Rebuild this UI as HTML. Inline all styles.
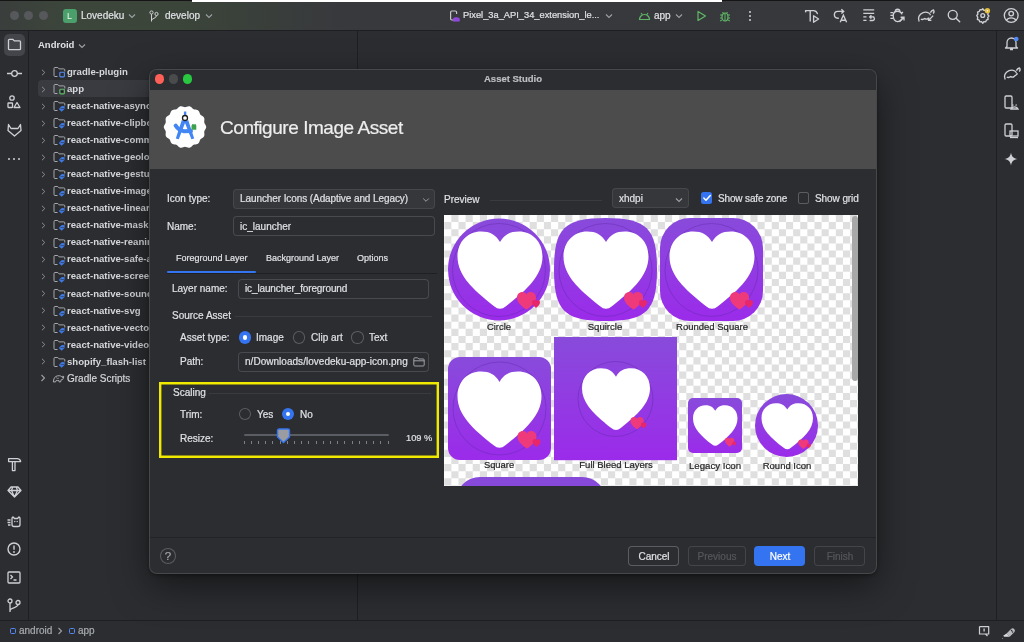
<!DOCTYPE html><html><head><meta charset="utf-8"><style>
html,body{margin:0;padding:0;width:1024px;height:642px;overflow:hidden;background:#2b2d30;}
body{position:relative;font-family:"Liberation Sans",sans-serif;}
.t{position:absolute;white-space:nowrap;will-change:transform;-webkit-text-stroke:0.2px currentColor;}
svg{overflow:visible}
</style></head><body>
<div style="position:absolute;left:0px;top:0px;width:1024px;height:30px;background:linear-gradient(90deg,#3a3e3c 0px,#3c463b 70px,#3b4539 180px,#393e3b 270px,#38393d 340px,#37383c 1024px)"></div>
<div style="position:absolute;left:0px;top:0px;width:1024px;height:1px;background:#151515"></div>
<div style="position:absolute;left:192px;top:0px;width:530px;height:2px;background:#ffffff"></div>
<div style="position:absolute;left:0px;top:30px;width:1024px;height:1px;background:#1e1f22"></div>
<div style="position:absolute;left:9.5px;top:11px;width:9px;height:9px;border-radius:50%;background:#56585b"></div>
<div style="position:absolute;left:24.0px;top:11px;width:9px;height:9px;border-radius:50%;background:#56585b"></div>
<div style="position:absolute;left:38.5px;top:11px;width:9px;height:9px;border-radius:50%;background:#56585b"></div>
<div style="position:absolute;left:63px;top:9px;width:14px;height:14px;border-radius:3px;background:#4a9f6a"></div>
<div class="t" style="left:66.8px;top:12.38px;font-size:9px;line-height:9px;color:#f4f4f4;font-weight:400;letter-spacing:0px;-webkit-text-stroke:0">L</div>
<div class="t" style="left:81px;top:11.04px;font-size:10px;line-height:10px;color:#dfe1e5;font-weight:400;letter-spacing:0px;">Lovedeku</div>
<svg style="position:absolute;left:128px;top:13px;" width="8" height="6" viewBox="0 0 8 6" fill="none"><path d="M1 1.5l3 3 3-3" stroke="#9da0a8" stroke-width="1.1"/></svg>
<svg style="position:absolute;left:149px;top:10px;" width="10" height="12" viewBox="0 0 10 12" fill="none"><circle cx="2.5" cy="2.5" r="1.6" stroke="#ced0d6" stroke-width="1"/><circle cx="7.5" cy="4" r="1.6" stroke="#ced0d6" stroke-width="1"/><path d="M2.5 4.1v7.4M7.5 5.6c0 3-5 2.5-5 5" stroke="#ced0d6" stroke-width="1"/></svg>
<div class="t" style="left:165px;top:11.04px;font-size:10px;line-height:10px;color:#dfe1e5;font-weight:400;letter-spacing:0px;">develop</div>
<svg style="position:absolute;left:205px;top:13px;" width="8" height="6" viewBox="0 0 8 6" fill="none"><path d="M1 1.5l3 3 3-3" stroke="#9da0a8" stroke-width="1.1"/></svg>
<svg style="position:absolute;left:448px;top:8px;" width="14" height="16" viewBox="0 0 14 16" fill="none"><path d="M5 12H3.8a1.2 1.2 0 0 1-1.2-1.2V4.2A1.2 1.2 0 0 1 3.8 3h3.6a1.2 1.2 0 0 1 1.2 1.2V6" stroke="#c4c6ca" stroke-width="1.2"/><path d="M5 12.8a3.3 3.3 0 0 1 6.6 0v.6H5z" fill="#9b4fe6"/><rect x="5" y="9.5" width="6.6" height="3.6" rx="1.5" fill="#8e48dc"/></svg>
<div class="t" style="left:463.2px;top:11.33px;font-size:9.3px;line-height:9.3px;color:#dfe1e5;font-weight:400;letter-spacing:0px;">Pixel_3a_API_34_extension_le...</div>
<svg style="position:absolute;left:605px;top:13px;" width="8" height="6" viewBox="0 0 8 6" fill="none"><path d="M1 1.5l3 3 3-3" stroke="#9da0a8" stroke-width="1.1"/></svg>
<svg style="position:absolute;left:638px;top:11px;" width="13" height="10" viewBox="0 0 13 10" fill="none"><path d="M1.5 8.5a5 5 0 0 1 10 0z" stroke="#5fb865" stroke-width="1.2"/><path d="M3 2l1.5 2M10 2l-1.5 2" stroke="#5fb865" stroke-width="1.1"/></svg>
<div class="t" style="left:654px;top:11.04px;font-size:10px;line-height:10px;color:#dfe1e5;font-weight:400;letter-spacing:0px;">app</div>
<svg style="position:absolute;left:675px;top:13px;" width="8" height="6" viewBox="0 0 8 6" fill="none"><path d="M1 1.5l3 3 3-3" stroke="#9da0a8" stroke-width="1.1"/></svg>
<svg style="position:absolute;left:696px;top:10px;" width="11" height="12" viewBox="0 0 11 12" fill="none"><path d="M2 1.5v9l7.5-4.5z" stroke="#5fb865" stroke-width="1.2" stroke-linejoin="round"/></svg>
<svg style="position:absolute;left:719px;top:9px;" width="12" height="14" viewBox="0 0 12 14" fill="none"><ellipse cx="6" cy="8" rx="3" ry="4" stroke="#5fb865" stroke-width="1.2"/><path d="M6 4v8M1 6h2M9 6h2M1 9h2M9 9h2M1 12l2-1M11 12l-2-1M3.5 3l1 1.3M8.5 3l-1 1.3" stroke="#5fb865" stroke-width="1"/></svg>
<div style="position:absolute;left:748.5px;top:11px;width:2px;height:2px;border-radius:1px;background:#ced0d6"></div>
<div style="position:absolute;left:748.5px;top:15px;width:2px;height:2px;border-radius:1px;background:#ced0d6"></div>
<div style="position:absolute;left:748.5px;top:19px;width:2px;height:2px;border-radius:1px;background:#ced0d6"></div>
<svg style="position:absolute;left:800px;top:0px;" width="24" height="30" viewBox="0 0 24 30" fill="none"><path d="M5.8 10.6h7.6c1.8 0 3.4 1.2 4 3" stroke="#ced0d6" stroke-width="1.35" stroke-linecap="round"/><path d="M5.6 10.2v2.2" stroke="#ced0d6" stroke-width="1.35"/><path d="M10.2 11v10.6" stroke="#ced0d6" stroke-width="1.35"/><path d="M13.6 15.8v6.4l5-3.2z" stroke="#ced0d6" stroke-width="1.35" stroke-linejoin="round"/></svg>
<svg style="position:absolute;left:830px;top:0px;" width="20" height="30" viewBox="0 0 20 30" fill="none"><path d="M10.5 11.4H7.8a3.4 3.4 0 0 0 0 6.8h1" stroke="#ced0d6" stroke-width="1.35"/><path d="M12.6 11.4h-2.5M11.4 9.2l2.3 2.2-2.3 2.2" stroke="#ced0d6" stroke-width="1.35"/><path d="M10.2 22.2l3.2-7 3.2 7M11.2 20.2h4.4" stroke="#ced0d6" stroke-width="1.35"/></svg>
<svg style="position:absolute;left:860px;top:0px;" width="20" height="30" viewBox="0 0 20 30" fill="none"><path d="M3.3 9.9h10.9M3.3 13.4h10.9M3.3 16.9h3.2M3.3 20.4h3.2" stroke="#ced0d6" stroke-width="1.35"/><path d="M14.2 16.9H9.8M11.4 15.2l-1.7 1.7 1.7 1.7M12.6 16.9a1.8 1.8 0 0 1 0 3.6H9.6" stroke="#ced0d6" stroke-width="1.35"/></svg>
<svg style="position:absolute;left:888px;top:0px;" width="24" height="30" viewBox="0 0 24 30" fill="none"><path d="M11.8 11.4a2.2 2.2 0 0 0-4.4 0" stroke="#ced0d6" stroke-width="1.35"/><path d="M14 18.6c-.7 1.8-2.1 3-4.4 3-2.8 0-4.4-2.6-4.4-5.8s1.6-4.6 4.4-4.6c2.4 0 3.8 1.2 4.3 3.2" stroke="#ced0d6" stroke-width="1.35"/><path d="M2.4 12.6h2.6M2.4 15.4h2.6M2.4 18.4h2.6M13.4 13.2l1.6-1.2" stroke="#ced0d6" stroke-width="1.35"/><path d="M11.4 21.8l4.6-4.6M12.6 17.2h3.4v3.4" stroke="#ced0d6" stroke-width="1.35"/></svg>
<svg style="position:absolute;left:914px;top:0px;" width="24" height="30" viewBox="0 0 24 30" fill="none"><path d="M5.2 21.4c-1-2.4-.8-5.4 1.6-7.4 2.2-1.8 5.6-2.2 8-1 .9.5 1.5 1.2 1.6 2.2" stroke="#ced0d6" stroke-width="1.35"/><path d="M16.4 12.6c.6-1.2 1.8-2.4 3-2.6.8 1 .7 2.6-.3 3.6" stroke="#ced0d6" stroke-width="1.35"/><path d="M6.8 19.2c1.4.6 2.8.4 4-.6 1.2.8 2.6.6 3.6-.4" stroke="#ced0d6" stroke-width="1.35"/><path d="M19.2 15.6l-4.6 4.8M14.6 17.6v2.8h2.8" stroke="#ced0d6" stroke-width="1.35"/></svg>
<svg style="position:absolute;left:944px;top:0px;" width="24" height="30" viewBox="0 0 24 30" fill="none"><circle cx="8.75" cy="14.8" r="4.5" stroke="#ced0d6" stroke-width="1.35"/><path d="M12.1 18.2l3.6 3.6" stroke="#ced0d6" stroke-width="1.35" stroke-linecap="round"/></svg>
<svg style="position:absolute;left:970px;top:0px;" width="24" height="30" viewBox="0 0 24 30" fill="none"><path d="M11.4 9.8l1.1 1.6 1.9-.2.6 1.8 1.8.8-.4 1.9 1.2 1.4-1.2 1.4.4 1.9-1.8.8-.6 1.8-1.9-.2-1.1 1.6-1.1-1.6-1.9.2-.6-1.8-1.8-.8.4-1.9L5.4 16.6l1.2-1.4-.4-1.9 1.8-.8.6-1.8 1.9.2z" transform="translate(1.35 -1.1)" stroke="#ced0d6" stroke-width="1.35" stroke-linejoin="round"/><circle cx="12.75" cy="15.5" r="1.9" stroke="#ced0d6" stroke-width="1.35"/><circle cx="17.4" cy="10.8" r="2.7" fill="#e7bd3c"/><circle cx="17.4" cy="10.8" r=".7" fill="#fff"/></svg>
<svg style="position:absolute;left:1000px;top:0px;" width="24" height="30" viewBox="0 0 24 30" fill="none"><circle cx="11.2" cy="15.5" r="6.9" stroke="#ced0d6" stroke-width="1.35"/><circle cx="11.2" cy="13.6" r="2.3" stroke="#ced0d6" stroke-width="1.35"/><path d="M6.4 20.4c1-1.6 2.8-2.5 4.8-2.5s3.8.9 4.8 2.5" stroke="#ced0d6" stroke-width="1.35"/></svg>
<div style="position:absolute;left:28px;top:31px;width:1px;height:589px;background:#1e1f22"></div>
<div style="position:absolute;left:4px;top:34px;width:21px;height:22px;border-radius:5px;background:#43454a"></div>
<svg style="position:absolute;left:7px;top:38px;" width="15" height="13" viewBox="0 0 15 13" fill="none"><path d="M1.5 2.3a1 1 0 0 1 1-1h3.2l1.6 1.6h5.2a1 1 0 0 1 1 1v6.8a1 1 0 0 1-1 1H2.5a1 1 0 0 1-1-1z" stroke="#ced0d6" stroke-width="1.3" stroke-linejoin="round"/></svg>
<svg style="position:absolute;left:6px;top:67px;" width="17" height="13" viewBox="0 0 17 13" fill="none"><circle cx="8.5" cy="6.5" r="2.8" stroke="#ced0d6" stroke-width="1.3"/><path d="M1 6.5h4.7M11.3 6.5H16" stroke="#ced0d6" stroke-width="1.3"/></svg>
<svg style="position:absolute;left:7px;top:95px;" width="14" height="14" viewBox="0 0 14 14" fill="none"><circle cx="5" cy="3" r="2.2" stroke="#ced0d6" stroke-width="1.3"/><rect x="1" y="8" width="4.5" height="4.5" rx=".5" stroke="#ced0d6" stroke-width="1.3"/><path d="M10 7.5l3 5H7z" stroke="#ced0d6" stroke-width="1.3" stroke-linejoin="round"/></svg>
<svg style="position:absolute;left:7px;top:123px;" width="15" height="14" viewBox="0 0 15 14" fill="none"><path d="M1.5 1.5l2.5 4h7l2.5-4 .5 6-6.5 5.5L1 7.5z" stroke="#ced0d6" stroke-width="1.3" stroke-linejoin="round"/></svg>
<div style="position:absolute;left:8px;top:158px;width:2px;height:2px;border-radius:1px;background:#ced0d6"></div>
<div style="position:absolute;left:13px;top:158px;width:2px;height:2px;border-radius:1px;background:#ced0d6"></div>
<div style="position:absolute;left:18px;top:158px;width:2px;height:2px;border-radius:1px;background:#ced0d6"></div>
<svg style="position:absolute;left:7px;top:457px;" width="15" height="15" viewBox="0 0 15 15" fill="none"><path d="M1.6 1.6h8.6c1.6 0 2.8.8 3.4 2.4v.6H1.6z" stroke="#ced0d6" stroke-width="1.3" stroke-linejoin="round"/><path d="M5.4 5v8.6h2.6V5" stroke="#ced0d6" stroke-width="1.3" stroke-linejoin="round"/></svg>
<svg style="position:absolute;left:7px;top:486px;" width="15" height="12" viewBox="0 0 15 12" fill="none"><path d="M4 1h7l3 3.5L7.5 11 1 4.5z M1 4.5h13M5.5 1.5L4.5 4.5l3 6.5 3-6.5-1-3" stroke="#ced0d6" stroke-width="1.3" stroke-linejoin="round"/></svg>
<svg style="position:absolute;left:7px;top:514px;" width="15" height="13" viewBox="0 0 15 13" fill="none"><path d="M6 3l1.5 1.5h3L12 3l1 1v6.5a2 2 0 0 1-2 2H7a2 2 0 0 1-2-2V4z" stroke="#ced0d6" stroke-width="1.3"/><path d="M0.5 6h3M0.5 8.5h3M1 11h2.5" stroke="#ced0d6" stroke-width="1.3"/><circle cx="7.8" cy="7.5" r=".7" fill="#ced0d6"/><circle cx="10.2" cy="7.5" r=".7" fill="#ced0d6"/></svg>
<svg style="position:absolute;left:7px;top:542px;" width="14" height="14" viewBox="0 0 14 14" fill="none"><circle cx="7" cy="7" r="6" stroke="#ced0d6" stroke-width="1.4"/><path d="M7 3.5v4.3" stroke="#ced0d6" stroke-width="1.4"/><circle cx="7" cy="10" r=".9" fill="#ced0d6"/></svg>
<svg style="position:absolute;left:7px;top:571px;" width="14" height="13" viewBox="0 0 14 13" fill="none"><rect x="1" y="1" width="12" height="11" rx="1" stroke="#ced0d6" stroke-width="1.3"/><path d="M3.5 4l2 2-2 2M6.5 9h3" stroke="#ced0d6" stroke-width="1.3"/></svg>
<svg style="position:absolute;left:7px;top:598px;" width="14" height="15" viewBox="0 0 14 15" fill="none"><circle cx="3" cy="3" r="2" stroke="#ced0d6" stroke-width="1.3"/><circle cx="11" cy="4.5" r="2" stroke="#ced0d6" stroke-width="1.3"/><path d="M3 5v9M11 6.5c0 3.5-8 3-8 6" stroke="#ced0d6" stroke-width="1.3"/></svg>
<div class="t" style="left:38px;top:40.26px;font-size:9.5px;line-height:9.5px;color:#dfe1e5;font-weight:700;letter-spacing:0px;-webkit-text-stroke:0">Android</div>
<svg style="position:absolute;left:78px;top:43px;" width="8" height="6" viewBox="0 0 8 6" fill="none"><path d="M1 1.5l3 3 3-3" stroke="#9da0a8" stroke-width="1.1"/></svg>
<div style="position:absolute;left:357px;top:31px;width:1px;height:589px;background:#1e1f22"></div>
<div style="position:absolute;left:38px;top:80px;width:320px;height:17px;border-radius:4px;background:#393b40"></div>
<svg style="position:absolute;left:41px;top:68.5px;" width="5" height="7" viewBox="0 0 5 7" fill="none"><path d="M1 .8l2.8 2.7L1 6.2" stroke="#8c8f94" stroke-width="1"/></svg>
<svg style="position:absolute;left:52.5px;top:67.0px;" width="13" height="11" viewBox="0 0 13 11" fill="none"><path d="M4.5 9.5H2a1 1 0 0 1-1-1V1.5a1 1 0 0 1 1-1h2.8l1.3 1.4h4.7a1 1 0 0 1 1 1V4.5" stroke="#a4a7ab" stroke-width="1"/></svg>
<svg style="position:absolute;left:52.5px;top:67.0px;" width="13" height="11" viewBox="0 0 13 11" fill="none"><rect x="6.8" y="5.3" width="4.6" height="4.6" rx=".8" stroke="#548af7" stroke-width="1.1"/></svg>
<div class="t" style="left:66.6px;top:66.87px;font-size:9.6px;line-height:9.6px;color:#d6d8dc;font-weight:700;letter-spacing:0px;-webkit-text-stroke:0">gradle-plugin</div>
<svg style="position:absolute;left:41px;top:85.55px;" width="5" height="7" viewBox="0 0 5 7" fill="none"><path d="M1 .8l2.8 2.7L1 6.2" stroke="#8c8f94" stroke-width="1"/></svg>
<svg style="position:absolute;left:52.5px;top:84.05px;" width="13" height="11" viewBox="0 0 13 11" fill="none"><path d="M4.5 9.5H2a1 1 0 0 1-1-1V1.5a1 1 0 0 1 1-1h2.8l1.3 1.4h4.7a1 1 0 0 1 1 1V4.5" stroke="#a4a7ab" stroke-width="1"/></svg>
<svg style="position:absolute;left:52.5px;top:84.05px;" width="13" height="11" viewBox="0 0 13 11" fill="none"><rect x="6.8" y="5.3" width="4.6" height="4.6" rx=".8" stroke="#5fb865" stroke-width="1.1"/><circle cx="9.1" cy="7.6" r=".9" fill="#111"/></svg>
<div class="t" style="left:66.6px;top:83.92px;font-size:9.6px;line-height:9.6px;color:#d6d8dc;font-weight:700;letter-spacing:0px;-webkit-text-stroke:0">app</div>
<svg style="position:absolute;left:41px;top:102.6px;" width="5" height="7" viewBox="0 0 5 7" fill="none"><path d="M1 .8l2.8 2.7L1 6.2" stroke="#8c8f94" stroke-width="1"/></svg>
<svg style="position:absolute;left:52.5px;top:101.1px;" width="13" height="11" viewBox="0 0 13 11" fill="none"><path d="M4.5 9.5H2a1 1 0 0 1-1-1V1.5a1 1 0 0 1 1-1h2.8l1.3 1.4h4.7a1 1 0 0 1 1 1V4.5" stroke="#a4a7ab" stroke-width="1"/></svg>
<svg style="position:absolute;left:52.5px;top:101.1px;" width="13" height="11" viewBox="0 0 13 11" fill="none"><path d="M6 7.8L8.8 5l3 .2-.3 2.8L8.7 10.8 6 8.2z" fill="#3f7ae6"/><path d="M7.5 7.6h3.5" stroke="#2b2d30" stroke-width=".6"/></svg>
<div class="t" style="left:66.6px;top:100.97px;font-size:9.6px;line-height:9.6px;color:#d6d8dc;font-weight:700;letter-spacing:0px;-webkit-text-stroke:0">react-native-async-storage</div>
<svg style="position:absolute;left:41px;top:119.65px;" width="5" height="7" viewBox="0 0 5 7" fill="none"><path d="M1 .8l2.8 2.7L1 6.2" stroke="#8c8f94" stroke-width="1"/></svg>
<svg style="position:absolute;left:52.5px;top:118.15px;" width="13" height="11" viewBox="0 0 13 11" fill="none"><path d="M4.5 9.5H2a1 1 0 0 1-1-1V1.5a1 1 0 0 1 1-1h2.8l1.3 1.4h4.7a1 1 0 0 1 1 1V4.5" stroke="#a4a7ab" stroke-width="1"/></svg>
<svg style="position:absolute;left:52.5px;top:118.15px;" width="13" height="11" viewBox="0 0 13 11" fill="none"><path d="M6 7.8L8.8 5l3 .2-.3 2.8L8.7 10.8 6 8.2z" fill="#3f7ae6"/><path d="M7.5 7.6h3.5" stroke="#2b2d30" stroke-width=".6"/></svg>
<div class="t" style="left:66.6px;top:118.02px;font-size:9.6px;line-height:9.6px;color:#d6d8dc;font-weight:700;letter-spacing:0px;-webkit-text-stroke:0">react-native-clipboard</div>
<svg style="position:absolute;left:41px;top:136.7px;" width="5" height="7" viewBox="0 0 5 7" fill="none"><path d="M1 .8l2.8 2.7L1 6.2" stroke="#8c8f94" stroke-width="1"/></svg>
<svg style="position:absolute;left:52.5px;top:135.2px;" width="13" height="11" viewBox="0 0 13 11" fill="none"><path d="M4.5 9.5H2a1 1 0 0 1-1-1V1.5a1 1 0 0 1 1-1h2.8l1.3 1.4h4.7a1 1 0 0 1 1 1V4.5" stroke="#a4a7ab" stroke-width="1"/></svg>
<svg style="position:absolute;left:52.5px;top:135.2px;" width="13" height="11" viewBox="0 0 13 11" fill="none"><path d="M6 7.8L8.8 5l3 .2-.3 2.8L8.7 10.8 6 8.2z" fill="#3f7ae6"/><path d="M7.5 7.6h3.5" stroke="#2b2d30" stroke-width=".6"/></svg>
<div class="t" style="left:66.6px;top:135.07px;font-size:9.6px;line-height:9.6px;color:#d6d8dc;font-weight:700;letter-spacing:0px;-webkit-text-stroke:0">react-native-community</div>
<svg style="position:absolute;left:41px;top:153.75px;" width="5" height="7" viewBox="0 0 5 7" fill="none"><path d="M1 .8l2.8 2.7L1 6.2" stroke="#8c8f94" stroke-width="1"/></svg>
<svg style="position:absolute;left:52.5px;top:152.25px;" width="13" height="11" viewBox="0 0 13 11" fill="none"><path d="M4.5 9.5H2a1 1 0 0 1-1-1V1.5a1 1 0 0 1 1-1h2.8l1.3 1.4h4.7a1 1 0 0 1 1 1V4.5" stroke="#a4a7ab" stroke-width="1"/></svg>
<svg style="position:absolute;left:52.5px;top:152.25px;" width="13" height="11" viewBox="0 0 13 11" fill="none"><path d="M6 7.8L8.8 5l3 .2-.3 2.8L8.7 10.8 6 8.2z" fill="#3f7ae6"/><path d="M7.5 7.6h3.5" stroke="#2b2d30" stroke-width=".6"/></svg>
<div class="t" style="left:66.6px;top:152.12px;font-size:9.6px;line-height:9.6px;color:#d6d8dc;font-weight:700;letter-spacing:0px;-webkit-text-stroke:0">react-native-geolocation</div>
<svg style="position:absolute;left:41px;top:170.8px;" width="5" height="7" viewBox="0 0 5 7" fill="none"><path d="M1 .8l2.8 2.7L1 6.2" stroke="#8c8f94" stroke-width="1"/></svg>
<svg style="position:absolute;left:52.5px;top:169.3px;" width="13" height="11" viewBox="0 0 13 11" fill="none"><path d="M4.5 9.5H2a1 1 0 0 1-1-1V1.5a1 1 0 0 1 1-1h2.8l1.3 1.4h4.7a1 1 0 0 1 1 1V4.5" stroke="#a4a7ab" stroke-width="1"/></svg>
<svg style="position:absolute;left:52.5px;top:169.3px;" width="13" height="11" viewBox="0 0 13 11" fill="none"><path d="M6 7.8L8.8 5l3 .2-.3 2.8L8.7 10.8 6 8.2z" fill="#3f7ae6"/><path d="M7.5 7.6h3.5" stroke="#2b2d30" stroke-width=".6"/></svg>
<div class="t" style="left:66.6px;top:169.17px;font-size:9.6px;line-height:9.6px;color:#d6d8dc;font-weight:700;letter-spacing:0px;-webkit-text-stroke:0">react-native-gesture-handler</div>
<svg style="position:absolute;left:41px;top:187.85000000000002px;" width="5" height="7" viewBox="0 0 5 7" fill="none"><path d="M1 .8l2.8 2.7L1 6.2" stroke="#8c8f94" stroke-width="1"/></svg>
<svg style="position:absolute;left:52.5px;top:186.35000000000002px;" width="13" height="11" viewBox="0 0 13 11" fill="none"><path d="M4.5 9.5H2a1 1 0 0 1-1-1V1.5a1 1 0 0 1 1-1h2.8l1.3 1.4h4.7a1 1 0 0 1 1 1V4.5" stroke="#a4a7ab" stroke-width="1"/></svg>
<svg style="position:absolute;left:52.5px;top:186.35000000000002px;" width="13" height="11" viewBox="0 0 13 11" fill="none"><path d="M6 7.8L8.8 5l3 .2-.3 2.8L8.7 10.8 6 8.2z" fill="#3f7ae6"/><path d="M7.5 7.6h3.5" stroke="#2b2d30" stroke-width=".6"/></svg>
<div class="t" style="left:66.6px;top:186.22px;font-size:9.6px;line-height:9.6px;color:#d6d8dc;font-weight:700;letter-spacing:0px;-webkit-text-stroke:0">react-native-image-picker</div>
<svg style="position:absolute;left:41px;top:204.9px;" width="5" height="7" viewBox="0 0 5 7" fill="none"><path d="M1 .8l2.8 2.7L1 6.2" stroke="#8c8f94" stroke-width="1"/></svg>
<svg style="position:absolute;left:52.5px;top:203.4px;" width="13" height="11" viewBox="0 0 13 11" fill="none"><path d="M4.5 9.5H2a1 1 0 0 1-1-1V1.5a1 1 0 0 1 1-1h2.8l1.3 1.4h4.7a1 1 0 0 1 1 1V4.5" stroke="#a4a7ab" stroke-width="1"/></svg>
<svg style="position:absolute;left:52.5px;top:203.4px;" width="13" height="11" viewBox="0 0 13 11" fill="none"><path d="M6 7.8L8.8 5l3 .2-.3 2.8L8.7 10.8 6 8.2z" fill="#3f7ae6"/><path d="M7.5 7.6h3.5" stroke="#2b2d30" stroke-width=".6"/></svg>
<div class="t" style="left:66.6px;top:203.27px;font-size:9.6px;line-height:9.6px;color:#d6d8dc;font-weight:700;letter-spacing:0px;-webkit-text-stroke:0">react-native-linear-gradient</div>
<svg style="position:absolute;left:41px;top:221.95000000000002px;" width="5" height="7" viewBox="0 0 5 7" fill="none"><path d="M1 .8l2.8 2.7L1 6.2" stroke="#8c8f94" stroke-width="1"/></svg>
<svg style="position:absolute;left:52.5px;top:220.45000000000002px;" width="13" height="11" viewBox="0 0 13 11" fill="none"><path d="M4.5 9.5H2a1 1 0 0 1-1-1V1.5a1 1 0 0 1 1-1h2.8l1.3 1.4h4.7a1 1 0 0 1 1 1V4.5" stroke="#a4a7ab" stroke-width="1"/></svg>
<svg style="position:absolute;left:52.5px;top:220.45000000000002px;" width="13" height="11" viewBox="0 0 13 11" fill="none"><path d="M6 7.8L8.8 5l3 .2-.3 2.8L8.7 10.8 6 8.2z" fill="#3f7ae6"/><path d="M7.5 7.6h3.5" stroke="#2b2d30" stroke-width=".6"/></svg>
<div class="t" style="left:66.6px;top:220.32px;font-size:9.6px;line-height:9.6px;color:#d6d8dc;font-weight:700;letter-spacing:0px;-webkit-text-stroke:0">react-native-masked-view</div>
<svg style="position:absolute;left:41px;top:239.0px;" width="5" height="7" viewBox="0 0 5 7" fill="none"><path d="M1 .8l2.8 2.7L1 6.2" stroke="#8c8f94" stroke-width="1"/></svg>
<svg style="position:absolute;left:52.5px;top:237.5px;" width="13" height="11" viewBox="0 0 13 11" fill="none"><path d="M4.5 9.5H2a1 1 0 0 1-1-1V1.5a1 1 0 0 1 1-1h2.8l1.3 1.4h4.7a1 1 0 0 1 1 1V4.5" stroke="#a4a7ab" stroke-width="1"/></svg>
<svg style="position:absolute;left:52.5px;top:237.5px;" width="13" height="11" viewBox="0 0 13 11" fill="none"><path d="M6 7.8L8.8 5l3 .2-.3 2.8L8.7 10.8 6 8.2z" fill="#3f7ae6"/><path d="M7.5 7.6h3.5" stroke="#2b2d30" stroke-width=".6"/></svg>
<div class="t" style="left:66.6px;top:237.37px;font-size:9.6px;line-height:9.6px;color:#d6d8dc;font-weight:700;letter-spacing:0px;-webkit-text-stroke:0">react-native-reanimated</div>
<svg style="position:absolute;left:41px;top:256.05px;" width="5" height="7" viewBox="0 0 5 7" fill="none"><path d="M1 .8l2.8 2.7L1 6.2" stroke="#8c8f94" stroke-width="1"/></svg>
<svg style="position:absolute;left:52.5px;top:254.55px;" width="13" height="11" viewBox="0 0 13 11" fill="none"><path d="M4.5 9.5H2a1 1 0 0 1-1-1V1.5a1 1 0 0 1 1-1h2.8l1.3 1.4h4.7a1 1 0 0 1 1 1V4.5" stroke="#a4a7ab" stroke-width="1"/></svg>
<svg style="position:absolute;left:52.5px;top:254.55px;" width="13" height="11" viewBox="0 0 13 11" fill="none"><path d="M6 7.8L8.8 5l3 .2-.3 2.8L8.7 10.8 6 8.2z" fill="#3f7ae6"/><path d="M7.5 7.6h3.5" stroke="#2b2d30" stroke-width=".6"/></svg>
<div class="t" style="left:66.6px;top:254.42px;font-size:9.6px;line-height:9.6px;color:#d6d8dc;font-weight:700;letter-spacing:0px;-webkit-text-stroke:0">react-native-safe-area-context</div>
<svg style="position:absolute;left:41px;top:273.1px;" width="5" height="7" viewBox="0 0 5 7" fill="none"><path d="M1 .8l2.8 2.7L1 6.2" stroke="#8c8f94" stroke-width="1"/></svg>
<svg style="position:absolute;left:52.5px;top:271.6px;" width="13" height="11" viewBox="0 0 13 11" fill="none"><path d="M4.5 9.5H2a1 1 0 0 1-1-1V1.5a1 1 0 0 1 1-1h2.8l1.3 1.4h4.7a1 1 0 0 1 1 1V4.5" stroke="#a4a7ab" stroke-width="1"/></svg>
<svg style="position:absolute;left:52.5px;top:271.6px;" width="13" height="11" viewBox="0 0 13 11" fill="none"><path d="M6 7.8L8.8 5l3 .2-.3 2.8L8.7 10.8 6 8.2z" fill="#3f7ae6"/><path d="M7.5 7.6h3.5" stroke="#2b2d30" stroke-width=".6"/></svg>
<div class="t" style="left:66.6px;top:271.47px;font-size:9.6px;line-height:9.6px;color:#d6d8dc;font-weight:700;letter-spacing:0px;-webkit-text-stroke:0">react-native-screens</div>
<svg style="position:absolute;left:41px;top:290.15px;" width="5" height="7" viewBox="0 0 5 7" fill="none"><path d="M1 .8l2.8 2.7L1 6.2" stroke="#8c8f94" stroke-width="1"/></svg>
<svg style="position:absolute;left:52.5px;top:288.65px;" width="13" height="11" viewBox="0 0 13 11" fill="none"><path d="M4.5 9.5H2a1 1 0 0 1-1-1V1.5a1 1 0 0 1 1-1h2.8l1.3 1.4h4.7a1 1 0 0 1 1 1V4.5" stroke="#a4a7ab" stroke-width="1"/></svg>
<svg style="position:absolute;left:52.5px;top:288.65px;" width="13" height="11" viewBox="0 0 13 11" fill="none"><path d="M6 7.8L8.8 5l3 .2-.3 2.8L8.7 10.8 6 8.2z" fill="#3f7ae6"/><path d="M7.5 7.6h3.5" stroke="#2b2d30" stroke-width=".6"/></svg>
<div class="t" style="left:66.6px;top:288.52px;font-size:9.6px;line-height:9.6px;color:#d6d8dc;font-weight:700;letter-spacing:0px;-webkit-text-stroke:0">react-native-sound</div>
<svg style="position:absolute;left:41px;top:307.20000000000005px;" width="5" height="7" viewBox="0 0 5 7" fill="none"><path d="M1 .8l2.8 2.7L1 6.2" stroke="#8c8f94" stroke-width="1"/></svg>
<svg style="position:absolute;left:52.5px;top:305.70000000000005px;" width="13" height="11" viewBox="0 0 13 11" fill="none"><path d="M4.5 9.5H2a1 1 0 0 1-1-1V1.5a1 1 0 0 1 1-1h2.8l1.3 1.4h4.7a1 1 0 0 1 1 1V4.5" stroke="#a4a7ab" stroke-width="1"/></svg>
<svg style="position:absolute;left:52.5px;top:305.70000000000005px;" width="13" height="11" viewBox="0 0 13 11" fill="none"><path d="M6 7.8L8.8 5l3 .2-.3 2.8L8.7 10.8 6 8.2z" fill="#3f7ae6"/><path d="M7.5 7.6h3.5" stroke="#2b2d30" stroke-width=".6"/></svg>
<div class="t" style="left:66.6px;top:305.57px;font-size:9.6px;line-height:9.6px;color:#d6d8dc;font-weight:700;letter-spacing:0px;-webkit-text-stroke:0">react-native-svg</div>
<svg style="position:absolute;left:41px;top:324.25px;" width="5" height="7" viewBox="0 0 5 7" fill="none"><path d="M1 .8l2.8 2.7L1 6.2" stroke="#8c8f94" stroke-width="1"/></svg>
<svg style="position:absolute;left:52.5px;top:322.75px;" width="13" height="11" viewBox="0 0 13 11" fill="none"><path d="M4.5 9.5H2a1 1 0 0 1-1-1V1.5a1 1 0 0 1 1-1h2.8l1.3 1.4h4.7a1 1 0 0 1 1 1V4.5" stroke="#a4a7ab" stroke-width="1"/></svg>
<svg style="position:absolute;left:52.5px;top:322.75px;" width="13" height="11" viewBox="0 0 13 11" fill="none"><path d="M6 7.8L8.8 5l3 .2-.3 2.8L8.7 10.8 6 8.2z" fill="#3f7ae6"/><path d="M7.5 7.6h3.5" stroke="#2b2d30" stroke-width=".6"/></svg>
<div class="t" style="left:66.6px;top:322.62px;font-size:9.6px;line-height:9.6px;color:#d6d8dc;font-weight:700;letter-spacing:0px;-webkit-text-stroke:0">react-native-vector-icons</div>
<svg style="position:absolute;left:41px;top:341.3px;" width="5" height="7" viewBox="0 0 5 7" fill="none"><path d="M1 .8l2.8 2.7L1 6.2" stroke="#8c8f94" stroke-width="1"/></svg>
<svg style="position:absolute;left:52.5px;top:339.8px;" width="13" height="11" viewBox="0 0 13 11" fill="none"><path d="M4.5 9.5H2a1 1 0 0 1-1-1V1.5a1 1 0 0 1 1-1h2.8l1.3 1.4h4.7a1 1 0 0 1 1 1V4.5" stroke="#a4a7ab" stroke-width="1"/></svg>
<svg style="position:absolute;left:52.5px;top:339.8px;" width="13" height="11" viewBox="0 0 13 11" fill="none"><path d="M6 7.8L8.8 5l3 .2-.3 2.8L8.7 10.8 6 8.2z" fill="#3f7ae6"/><path d="M7.5 7.6h3.5" stroke="#2b2d30" stroke-width=".6"/></svg>
<div class="t" style="left:66.6px;top:339.67px;font-size:9.6px;line-height:9.6px;color:#d6d8dc;font-weight:700;letter-spacing:0px;-webkit-text-stroke:0">react-native-video</div>
<svg style="position:absolute;left:41px;top:358.35px;" width="5" height="7" viewBox="0 0 5 7" fill="none"><path d="M1 .8l2.8 2.7L1 6.2" stroke="#8c8f94" stroke-width="1"/></svg>
<svg style="position:absolute;left:52.5px;top:356.85px;" width="13" height="11" viewBox="0 0 13 11" fill="none"><path d="M4.5 9.5H2a1 1 0 0 1-1-1V1.5a1 1 0 0 1 1-1h2.8l1.3 1.4h4.7a1 1 0 0 1 1 1V4.5" stroke="#a4a7ab" stroke-width="1"/></svg>
<svg style="position:absolute;left:52.5px;top:356.85px;" width="13" height="11" viewBox="0 0 13 11" fill="none"><path d="M6 7.8L8.8 5l3 .2-.3 2.8L8.7 10.8 6 8.2z" fill="#3f7ae6"/><path d="M7.5 7.6h3.5" stroke="#2b2d30" stroke-width=".6"/></svg>
<div class="t" style="left:66.6px;top:356.72px;font-size:9.6px;line-height:9.6px;color:#d6d8dc;font-weight:700;letter-spacing:0px;-webkit-text-stroke:0">shopify_flash-list</div>
<svg style="position:absolute;left:40px;top:374.40000000000003px;" width="6" height="8" viewBox="0 0 6 8" fill="none"><path d="M1.5 1l3 3-3 3" stroke="#9da0a8" stroke-width="1.1"/></svg>
<svg style="position:absolute;left:52px;top:373.40000000000003px;" width="14" height="12" viewBox="0 0 14 12" fill="none"><g transform="scale(.85)"><path d="M1.5 10.5l.8-3.5C3 4.5 5.5 3 8.5 3.2c1.8.1 3 .9 3.8 2.2l.5-1.8 1 .5-.6 2.5c-.3 1-1.2 1.5-2.3 1.3L10 10.5H8.3L8 8.7c-1 .3-2 .3-3 0l-.8 1.8z" stroke="#c1c3c8" stroke-width="1" stroke-linejoin="round"/><path d="M5 5.5c1 .8 2 1 3 .6" stroke="#c1c3c8" stroke-width=".8"/></g></svg>
<div class="t" style="left:66.6px;top:373.74px;font-size:10px;line-height:10px;color:#d5d7db;font-weight:400;letter-spacing:0px;">Gradle Scripts</div>
<div style="position:absolute;left:996px;top:31px;width:1px;height:589px;background:#1e1f22"></div>
<svg style="position:absolute;left:1004px;top:36px;" width="15" height="15" viewBox="0 0 15 15" fill="none"><path d="M3 10.5V6.5a4.5 4.5 0 0 1 9 0v4l1.5 1.5h-12z M6 13.5h3" stroke="#ced0d6" stroke-width="1.3" stroke-linejoin="round"/><circle cx="12.3" cy="3" r="2.3" fill="#548af7"/></svg>
<svg style="position:absolute;left:1000px;top:58px;" width="24" height="30" viewBox="0 0 24 30" fill="none"><path d="M5.2 21.4c-1-2.4-.8-5.4 1.6-7.4 2.2-1.8 5.6-2.2 8-1 .9.5 1.5 1.2 1.6 2.2" stroke="#ced0d6" stroke-width="1.35"/><path d="M16.4 12.6c.6-1.2 1.8-2.4 3-2.6.8 1 .7 2.6-.3 3.6" stroke="#ced0d6" stroke-width="1.35"/><path d="M6.8 19.2c1.4.6 2.8.4 4-.6 1.2.8 2.6.6 3.6-.4 1.2-.6 2.4-1.6 3-3" stroke="#ced0d6" stroke-width="1.35"/></svg>
<svg style="position:absolute;left:1004px;top:95px;" width="15" height="15" viewBox="0 0 15 15" fill="none"><rect x="1" y="1" width="7" height="12" rx="1.2" stroke="#ced0d6" stroke-width="1.3"/><path d="M7 14a4 4 0 0 1 7 0z M8.5 9.5l.8 1.2M12.5 9.5l-.8 1.2" stroke="#ced0d6" stroke-width="1.3"/></svg>
<svg style="position:absolute;left:1004px;top:123px;" width="15" height="15" viewBox="0 0 15 15" fill="none"><rect x="1" y="1" width="7" height="12" rx="1.2" stroke="#ced0d6" stroke-width="1.3"/><rect x="6" y="8" width="8" height="5" stroke="#ced0d6" stroke-width="1.3"/><path d="M6 14.5h8" stroke="#ced0d6" stroke-width="1.3"/></svg>
<svg style="position:absolute;left:1004px;top:152px;" width="14" height="14" viewBox="0 0 14 14" fill="none"><path d="M7 0.5C7.6 4.5 9.5 6.4 13.5 7 9.5 7.6 7.6 9.5 7 13.5 6.4 9.5 4.5 7.6 0.5 7 4.5 6.4 6.4 4.5 7 .5z" fill="#ced0d6"/></svg>
<div style="position:absolute;left:0px;top:620px;width:1024px;height:1px;background:#1e1f22"></div>
<div style="position:absolute;left:10px;top:628px;width:6px;height:6px;border:1.2px solid #548af7;border-radius:1.5px;box-sizing:border-box"></div>
<div class="t" style="left:19px;top:625.53px;font-size:10px;line-height:10px;color:#a8abb0;font-weight:400;letter-spacing:0px;">android</div>
<svg style="position:absolute;left:57px;top:627px;" width="6" height="8" viewBox="0 0 6 8" fill="none"><path d="M1.5 1l3 3-3 3" stroke="#9da0a8" stroke-width="1.1"/></svg>
<div style="position:absolute;left:69px;top:628px;width:6px;height:6px;border:1.2px solid #548af7;border-radius:1.5px;box-sizing:border-box"></div>
<div class="t" style="left:78px;top:625.53px;font-size:10px;line-height:10px;color:#a8abb0;font-weight:400;letter-spacing:0px;">app</div>
<svg style="position:absolute;left:976px;top:624px;" width="16" height="16" viewBox="0 0 16 16" fill="none"><path d="M3.5 2.6h9.2v7.4H9.6L11.5 12" stroke="#ced0d6" stroke-width="1.2" stroke-linejoin="round"/><path d="M3.5 2.6v7.4h6" stroke="#ced0d6" stroke-width="1.2"/><path d="M8.1 4.6v3" stroke="#ced0d6" stroke-width="1.3"/></svg>
<svg style="position:absolute;left:1000px;top:624px;" width="16" height="16" viewBox="0 0 16 16" fill="none"><path d="M6.5 9.5l4.8-4.8a2.3 2.3 0 0 1 3.2 3.2L9.7 12.7z" fill="#b8babe"/><path d="M6.5 9.5L3.2 11.8 4.2 12.8 9.7 12.7z" fill="#d8dade"/><circle cx="11.6" cy="6.6" r=".8" fill="#2b2d30"/><circle cx="12.6" cy="8" r=".7" fill="#2b2d30"/><path d="M3 14l-1 1" stroke="#8c8f94" stroke-width=".8"/></svg>
<div style="position:absolute;left:150px;top:69.5px;width:726px;height:503.5px;border-radius:7px;background:#2b2d30;box-shadow:0 0 0 1px #46484c, 0 2px 5px rgba(0,0,0,.45), 0 12px 36px rgba(0,0,0,.5);overflow:hidden">
<div style="position:absolute;left:0;top:0;width:100%;height:20px;background:#2b2d30"></div>
<div style="position:absolute;left:0;top:20px;width:100%;height:79.5px;background:#4c4c4c"></div>
</div>
<div style="position:absolute;left:154.9px;top:74.4px;width:9.2px;height:9.2px;border-radius:50%;background:#fe5f57"></div>
<div style="position:absolute;left:169.1px;top:74.4px;width:9.2px;height:9.2px;border-radius:50%;background:#4a4b4d"></div>
<div style="position:absolute;left:183.3px;top:74.4px;width:9.2px;height:9.2px;border-radius:50%;background:#28c840"></div>
<div class="t" style="left:484px;top:73.96px;font-size:9.5px;line-height:9.5px;color:#bcbec2;font-weight:700;letter-spacing:0px;">Asset Studio</div>
<svg style="position:absolute;left:163px;top:105px;" width="44" height="44" viewBox="0 0 44 44" fill="none"><path d="M43.20 22.00 L43.05 22.95 L42.63 23.86 L42.10 24.72 L41.61 25.56 L41.30 26.41 L41.22 27.30 L41.29 28.27 L41.40 29.28 L41.37 30.28 L41.10 31.20 L40.55 31.98 L39.78 32.63 L38.93 33.17 L38.13 33.72 L37.48 34.35 L37.01 35.12 L36.66 36.02 L36.32 36.97 L35.86 37.86 L35.22 38.57 L34.38 39.04 L33.41 39.29 L32.40 39.41 L31.45 39.55 L30.59 39.84 L29.83 40.33 L29.13 40.99 L28.40 41.70 L27.60 42.31 L26.72 42.67 L25.76 42.73 L24.78 42.53 L23.82 42.20 L22.89 41.91 L22.00 41.80 L21.11 41.91 L20.18 42.20 L19.22 42.53 L18.24 42.73 L17.28 42.67 L16.40 42.31 L15.60 41.70 L14.87 40.99 L14.17 40.33 L13.41 39.84 L12.55 39.55 L11.60 39.41 L10.59 39.29 L9.62 39.04 L8.78 38.57 L8.14 37.86 L7.68 36.97 L7.34 36.02 L6.99 35.12 L6.52 34.35 L5.87 33.72 L5.07 33.17 L4.22 32.63 L3.45 31.98 L2.90 31.20 L2.63 30.28 L2.60 29.28 L2.71 28.27 L2.78 27.30 L2.70 26.41 L2.39 25.56 L1.90 24.72 L1.37 23.86 L0.95 22.95 L0.80 22.00 L0.95 21.05 L1.37 20.14 L1.90 19.28 L2.39 18.44 L2.70 17.59 L2.78 16.70 L2.71 15.73 L2.60 14.72 L2.63 13.72 L2.90 12.80 L3.45 12.02 L4.22 11.37 L5.07 10.83 L5.87 10.28 L6.52 9.65 L6.99 8.88 L7.34 7.98 L7.68 7.03 L8.14 6.14 L8.78 5.43 L9.62 4.96 L10.59 4.71 L11.60 4.59 L12.55 4.45 L13.41 4.16 L14.17 3.67 L14.87 3.01 L15.60 2.30 L16.40 1.69 L17.28 1.33 L18.24 1.27 L19.22 1.47 L20.18 1.80 L21.11 2.09 L22.00 2.20 L22.89 2.09 L23.82 1.80 L24.78 1.47 L25.76 1.27 L26.72 1.33 L27.60 1.69 L28.40 2.30 L29.13 3.01 L29.83 3.67 L30.59 4.16 L31.45 4.45 L32.40 4.59 L33.41 4.71 L34.38 4.96 L35.22 5.43 L35.86 6.14 L36.32 7.03 L36.66 7.98 L37.01 8.88 L37.48 9.65 L38.13 10.28 L38.93 10.83 L39.78 11.37 L40.55 12.02 L41.10 12.80 L41.37 13.72 L41.40 14.72 L41.29 15.73 L41.22 16.70 L41.30 17.59 L41.61 18.44 L42.10 19.28 L42.63 20.14 L43.05 21.05Z" fill="#ffffff"/>
<path d="M20.9 6.5h2.4v6h-2.4z" fill="#4285f4"/>
<path d="M18.8 15.0L22.6 16.4 15.8 34.2 12.8 33.4Z M21.4 16.4L25.2 15.0 31.2 33.4 28.4 34.2Z" fill="#4285f4"/>
<path d="M12.6 20.6Q15.5 25.5 21 26.2L28 26" stroke="#4285f4" stroke-width="4" stroke-linecap="round"/>
<circle cx="22" cy="13" r="2.5" fill="#fff" stroke="#1d1d1d" stroke-width="1.3"/>
<path d="M28.5 20.5a3 3.2 0 0 1 4.8 0v4.2h-4.8z" fill="#3da14b"/><path d="M29.3 19l1 1.6M32.6 19l-1 1.6" stroke="#3da14b" stroke-width=".8"/></svg>
<div class="t" style="left:220px;top:117.72px;font-size:19px;line-height:19px;color:#eeeeee;font-weight:400;letter-spacing:-0.45px;">Configure Image Asset</div>
<div class="t" style="left:167px;top:194.03px;font-size:10px;line-height:10px;color:#dfe1e5;font-weight:400;letter-spacing:0px;">Icon type:</div>
<div style="position:absolute;left:233px;top:188.5px;width:202px;height:20px;border-radius:4px;background:#35373b;box-shadow:inset 0 0 0 1px #45474c"></div>
<div class="t" style="left:239.5px;top:194.03px;font-size:10px;line-height:10px;color:#dfe1e5;font-weight:400;letter-spacing:-0.09px;">Launcher Icons (Adaptive and Legacy)</div>
<svg style="position:absolute;left:421.5px;top:197px;" width="8" height="6" viewBox="0 0 8 6" fill="none"><path d="M1.2 1.5l2.8 2.8 2.8-2.8" stroke="#9da0a8" stroke-width="1"/></svg>
<div class="t" style="left:167px;top:221.53px;font-size:10px;line-height:10px;color:#dfe1e5;font-weight:400;letter-spacing:0px;">Name:</div>
<div style="position:absolute;left:233px;top:216px;width:202px;height:20px;border-radius:4px;background:#2b2d30;box-shadow:inset 0 0 0 1px #484a4f"></div>
<div class="t" style="left:239.5px;top:221.53px;font-size:10px;line-height:10px;color:#dfe1e5;font-weight:400;letter-spacing:0px;">ic_launcher</div>
<div class="t" style="left:175.8px;top:254.18px;font-size:9px;line-height:9px;color:#dfe1e5;font-weight:400;letter-spacing:0px;">Foreground Layer</div>
<div class="t" style="left:265.7px;top:254.18px;font-size:9px;line-height:9px;color:#dfe1e5;font-weight:400;letter-spacing:0px;">Background Layer</div>
<div class="t" style="left:357.4px;top:254.18px;font-size:9px;line-height:9px;color:#dfe1e5;font-weight:400;letter-spacing:0px;">Options</div>
<div style="position:absolute;left:167px;top:272.5px;width:270px;height:1px;background:#1f2023"></div>
<div style="position:absolute;left:167px;top:271.2px;width:89px;height:2.2px;background:#3574f0;border-radius:1px"></div>
<div class="t" style="left:172.4px;top:283.84px;font-size:10px;line-height:10px;color:#dfe1e5;font-weight:400;letter-spacing:0px;">Layer name:</div>
<div style="position:absolute;left:238px;top:279px;width:191px;height:20px;border-radius:4px;background:#2b2d30;box-shadow:inset 0 0 0 1px #484a4f"></div>
<div class="t" style="left:244.6px;top:283.84px;font-size:10px;line-height:10px;color:#dfe1e5;font-weight:400;letter-spacing:-0.13px;">ic_launcher_foreground</div>
<div class="t" style="left:172.4px;top:310.54px;font-size:10px;line-height:10px;color:#dfe1e5;font-weight:400;letter-spacing:0px;">Source Asset</div>
<div style="position:absolute;left:235px;top:316px;width:197px;height:1px;background:#393b40"></div>
<div class="t" style="left:179.6px;top:332.94px;font-size:10px;line-height:10px;color:#dfe1e5;font-weight:400;letter-spacing:0px;">Asset type:</div>
<div style="position:absolute;left:238.8px;top:331.3px;width:12.4px;height:12.4px;border-radius:50%;background:#3574f0"></div>
<div style="position:absolute;left:242.9px;top:335.4px;width:4.2px;height:4.2px;border-radius:50%;background:#ffffff"></div>
<div class="t" style="left:256.4px;top:332.94px;font-size:10px;line-height:10px;color:#dfe1e5;font-weight:400;letter-spacing:0px;">Image</div>
<div style="position:absolute;left:292.7px;top:331.3px;width:12.4px;height:12.4px;border-radius:50%;box-shadow:inset 0 0 0 1px #5a5d63;box-sizing:border-box"></div>
<div class="t" style="left:310.6px;top:332.94px;font-size:10px;line-height:10px;color:#dfe1e5;font-weight:400;letter-spacing:0px;">Clip art</div>
<div style="position:absolute;left:351.2px;top:331.3px;width:12.4px;height:12.4px;border-radius:50%;box-shadow:inset 0 0 0 1px #5a5d63;box-sizing:border-box"></div>
<div class="t" style="left:369.2px;top:332.94px;font-size:10px;line-height:10px;color:#dfe1e5;font-weight:400;letter-spacing:0px;">Text</div>
<div class="t" style="left:179.6px;top:356.94px;font-size:10px;line-height:10px;color:#dfe1e5;font-weight:400;letter-spacing:0px;">Path:</div>
<div style="position:absolute;left:238px;top:352px;width:191px;height:20px;border-radius:4px;background:#2b2d30;box-shadow:inset 0 0 0 1px #484a4f"></div>
<div class="t" style="left:244.6px;top:356.94px;font-size:10px;line-height:10px;color:#dfe1e5;font-weight:400;letter-spacing:0.03px;">n/Downloads/lovedeku-app-icon.png</div>
<svg style="position:absolute;left:413px;top:357px;" width="12" height="10" viewBox="0 0 12 10" fill="none"><path d="M.8 1.8a1 1 0 0 1 1-1h2.8l1.2 1.2h4.4a1 1 0 0 1 1 1v5a1 1 0 0 1-1 1H1.8a1 1 0 0 1-1-1z M.8 3.8h10.4" stroke="#9da0a8" stroke-width="1"/></svg>
<div style="position:absolute;left:159.2px;top:382px;width:280px;height:76.2px;box-shadow:inset 0 0 0 2.4px #f0ea00"></div>
<div class="t" style="left:172.7px;top:388.34px;font-size:10px;line-height:10px;color:#dfe1e5;font-weight:400;letter-spacing:0px;">Scaling</div>
<div style="position:absolute;left:208.6px;top:393.3px;width:222.5px;height:1px;background:#393b40"></div>
<div class="t" style="left:180px;top:409.94px;font-size:10px;line-height:10px;color:#dfe1e5;font-weight:400;letter-spacing:0px;">Trim:</div>
<div style="position:absolute;left:238.60000000000002px;top:408.0px;width:12.4px;height:12.4px;border-radius:50%;box-shadow:inset 0 0 0 1px #5a5d63;box-sizing:border-box"></div>
<div class="t" style="left:256.6px;top:409.94px;font-size:10px;line-height:10px;color:#dfe1e5;font-weight:400;letter-spacing:0px;">Yes</div>
<div style="position:absolute;left:282.1px;top:408.0px;width:12.4px;height:12.4px;border-radius:50%;background:#3574f0"></div>
<div style="position:absolute;left:286.2px;top:412.09999999999997px;width:4.2px;height:4.2px;border-radius:50%;background:#ffffff"></div>
<div class="t" style="left:299.7px;top:409.94px;font-size:10px;line-height:10px;color:#dfe1e5;font-weight:400;letter-spacing:0px;">No</div>
<div class="t" style="left:180px;top:433.74px;font-size:10px;line-height:10px;color:#dfe1e5;font-weight:400;letter-spacing:0px;">Resize:</div>
<div style="position:absolute;left:243.7px;top:434px;width:145px;height:2.2px;background:#5a5d63;border-radius:1px"></div>
<div style="position:absolute;left:243.5px;top:440.5px;width:1.1px;height:3.5px;background:#7d8087"></div>
<div style="position:absolute;left:250.7px;top:440.5px;width:1.1px;height:3.5px;background:#7d8087"></div>
<div style="position:absolute;left:257.9px;top:440.5px;width:1.1px;height:3.5px;background:#7d8087"></div>
<div style="position:absolute;left:265.1px;top:440.5px;width:1.1px;height:3.5px;background:#7d8087"></div>
<div style="position:absolute;left:272.3px;top:440.5px;width:1.1px;height:3.5px;background:#7d8087"></div>
<div style="position:absolute;left:279.5px;top:440.5px;width:1.1px;height:3.5px;background:#7d8087"></div>
<div style="position:absolute;left:286.7px;top:440.5px;width:1.1px;height:3.5px;background:#7d8087"></div>
<div style="position:absolute;left:293.9px;top:440.5px;width:1.1px;height:3.5px;background:#7d8087"></div>
<div style="position:absolute;left:301.1px;top:440.5px;width:1.1px;height:3.5px;background:#7d8087"></div>
<div style="position:absolute;left:308.3px;top:440.5px;width:1.1px;height:3.5px;background:#7d8087"></div>
<div style="position:absolute;left:315.5px;top:440.5px;width:1.1px;height:3.5px;background:#7d8087"></div>
<div style="position:absolute;left:322.7px;top:440.5px;width:1.1px;height:3.5px;background:#7d8087"></div>
<div style="position:absolute;left:329.9px;top:440.5px;width:1.1px;height:3.5px;background:#7d8087"></div>
<div style="position:absolute;left:337.1px;top:440.5px;width:1.1px;height:3.5px;background:#7d8087"></div>
<div style="position:absolute;left:344.3px;top:440.5px;width:1.1px;height:3.5px;background:#7d8087"></div>
<div style="position:absolute;left:351.5px;top:440.5px;width:1.1px;height:3.5px;background:#7d8087"></div>
<div style="position:absolute;left:358.7px;top:440.5px;width:1.1px;height:3.5px;background:#7d8087"></div>
<div style="position:absolute;left:365.9px;top:440.5px;width:1.1px;height:3.5px;background:#7d8087"></div>
<div style="position:absolute;left:373.1px;top:440.5px;width:1.1px;height:3.5px;background:#7d8087"></div>
<div style="position:absolute;left:380.3px;top:440.5px;width:1.1px;height:3.5px;background:#7d8087"></div>
<div style="position:absolute;left:387.5px;top:440.5px;width:1.1px;height:3.5px;background:#7d8087"></div>
<svg style="position:absolute;left:276px;top:428px;" width="16" height="16" viewBox="0 0 16 16" fill="none"><path d="M1.5 2.5a1.5 1.5 0 0 1 1.5-1.5h9a1.5 1.5 0 0 1 1.5 1.5v6.5L7.5 14.5 1.5 9z" fill="#9a9ca2" stroke="#3574f0" stroke-width="1.4"/></svg>
<div class="t" style="left:405.8px;top:434.13px;font-size:9.3px;line-height:9.3px;color:#dfe1e5;font-weight:400;letter-spacing:0px;">109 %</div>
<div class="t" style="left:444px;top:194.53px;font-size:10px;line-height:10px;color:#dfe1e5;font-weight:400;letter-spacing:0px;">Preview</div>
<div style="position:absolute;left:490px;top:199.5px;width:112px;height:1px;background:#393b40"></div>
<div style="position:absolute;left:612px;top:188px;width:77px;height:20.3px;border-radius:4px;background:#35373b;box-shadow:inset 0 0 0 1px #45474c"></div>
<div class="t" style="left:618.7px;top:193.53px;font-size:10px;line-height:10px;color:#dfe1e5;font-weight:400;letter-spacing:0px;">xhdpi</div>
<svg style="position:absolute;left:675px;top:196.5px;" width="8" height="6" viewBox="0 0 8 6" fill="none"><path d="M1 1.5l3 3 3-3" stroke="#9da0a8" stroke-width="1.1"/></svg>
<div style="position:absolute;left:700.7px;top:192.3px;width:11.5px;height:11.5px;border-radius:2.5px;background:#3574f0"></div>
<svg style="position:absolute;left:700.7px;top:192.3px;" width="12" height="12" viewBox="0 0 12 12" fill="none"><path d="M2.8 6l2.2 2.3 4.3-4.8" stroke="#fff" stroke-width="1.5" stroke-linecap="round" stroke-linejoin="round"/></svg>
<div class="t" style="left:718.2px;top:193.53px;font-size:10px;line-height:10px;color:#dfe1e5;font-weight:400;letter-spacing:-0.15px;">Show safe zone</div>
<div style="position:absolute;left:797.5px;top:192px;width:11.5px;height:11.5px;border-radius:2.5px;box-shadow:inset 0 0 0 1px #5a5d63"></div>
<div class="t" style="left:814.7px;top:193.53px;font-size:10px;line-height:10px;color:#dfe1e5;font-weight:400;letter-spacing:-0.08px;">Show grid</div>
<div style="position:absolute;left:444px;top:215px;width:414px;height:271px;overflow:hidden;background:#fff">
<svg width="414" height="271" style="position:absolute;left:0;top:0"><path fill="#dfdfdf" d="M7.37 -0.10h7.12v7.12h-7.12zM21.61 -0.10h7.12v7.12h-7.12zM35.85 -0.10h7.12v7.12h-7.12zM50.09 -0.10h7.12v7.12h-7.12zM64.33 -0.10h7.12v7.12h-7.12zM78.57 -0.10h7.12v7.12h-7.12zM92.81 -0.10h7.12v7.12h-7.12zM107.05 -0.10h7.12v7.12h-7.12zM121.29 -0.10h7.12v7.12h-7.12zM135.53 -0.10h7.12v7.12h-7.12zM149.77 -0.10h7.12v7.12h-7.12zM164.01 -0.10h7.12v7.12h-7.12zM178.25 -0.10h7.12v7.12h-7.12zM192.49 -0.10h7.12v7.12h-7.12zM206.73 -0.10h7.12v7.12h-7.12zM220.97 -0.10h7.12v7.12h-7.12zM235.21 -0.10h7.12v7.12h-7.12zM249.45 -0.10h7.12v7.12h-7.12zM263.69 -0.10h7.12v7.12h-7.12zM277.93 -0.10h7.12v7.12h-7.12zM292.17 -0.10h7.12v7.12h-7.12zM306.41 -0.10h7.12v7.12h-7.12zM320.65 -0.10h7.12v7.12h-7.12zM334.89 -0.10h7.12v7.12h-7.12zM349.13 -0.10h7.12v7.12h-7.12zM363.37 -0.10h7.12v7.12h-7.12zM377.61 -0.10h7.12v7.12h-7.12zM391.85 -0.10h7.12v7.12h-7.12zM406.09 -0.10h7.12v7.12h-7.12zM0.25 7.02h7.12v7.12h-7.12zM14.49 7.02h7.12v7.12h-7.12zM28.73 7.02h7.12v7.12h-7.12zM42.97 7.02h7.12v7.12h-7.12zM57.21 7.02h7.12v7.12h-7.12zM71.45 7.02h7.12v7.12h-7.12zM85.69 7.02h7.12v7.12h-7.12zM99.93 7.02h7.12v7.12h-7.12zM114.17 7.02h7.12v7.12h-7.12zM128.41 7.02h7.12v7.12h-7.12zM142.65 7.02h7.12v7.12h-7.12zM156.89 7.02h7.12v7.12h-7.12zM171.13 7.02h7.12v7.12h-7.12zM185.37 7.02h7.12v7.12h-7.12zM199.61 7.02h7.12v7.12h-7.12zM213.85 7.02h7.12v7.12h-7.12zM228.09 7.02h7.12v7.12h-7.12zM242.33 7.02h7.12v7.12h-7.12zM256.57 7.02h7.12v7.12h-7.12zM270.81 7.02h7.12v7.12h-7.12zM285.05 7.02h7.12v7.12h-7.12zM299.29 7.02h7.12v7.12h-7.12zM313.53 7.02h7.12v7.12h-7.12zM327.77 7.02h7.12v7.12h-7.12zM342.01 7.02h7.12v7.12h-7.12zM356.25 7.02h7.12v7.12h-7.12zM370.49 7.02h7.12v7.12h-7.12zM384.73 7.02h7.12v7.12h-7.12zM398.97 7.02h7.12v7.12h-7.12zM413.21 7.02h7.12v7.12h-7.12zM7.37 14.14h7.12v7.12h-7.12zM21.61 14.14h7.12v7.12h-7.12zM35.85 14.14h7.12v7.12h-7.12zM50.09 14.14h7.12v7.12h-7.12zM64.33 14.14h7.12v7.12h-7.12zM78.57 14.14h7.12v7.12h-7.12zM92.81 14.14h7.12v7.12h-7.12zM107.05 14.14h7.12v7.12h-7.12zM121.29 14.14h7.12v7.12h-7.12zM135.53 14.14h7.12v7.12h-7.12zM149.77 14.14h7.12v7.12h-7.12zM164.01 14.14h7.12v7.12h-7.12zM178.25 14.14h7.12v7.12h-7.12zM192.49 14.14h7.12v7.12h-7.12zM206.73 14.14h7.12v7.12h-7.12zM220.97 14.14h7.12v7.12h-7.12zM235.21 14.14h7.12v7.12h-7.12zM249.45 14.14h7.12v7.12h-7.12zM263.69 14.14h7.12v7.12h-7.12zM277.93 14.14h7.12v7.12h-7.12zM292.17 14.14h7.12v7.12h-7.12zM306.41 14.14h7.12v7.12h-7.12zM320.65 14.14h7.12v7.12h-7.12zM334.89 14.14h7.12v7.12h-7.12zM349.13 14.14h7.12v7.12h-7.12zM363.37 14.14h7.12v7.12h-7.12zM377.61 14.14h7.12v7.12h-7.12zM391.85 14.14h7.12v7.12h-7.12zM406.09 14.14h7.12v7.12h-7.12zM0.25 21.26h7.12v7.12h-7.12zM14.49 21.26h7.12v7.12h-7.12zM28.73 21.26h7.12v7.12h-7.12zM42.97 21.26h7.12v7.12h-7.12zM57.21 21.26h7.12v7.12h-7.12zM71.45 21.26h7.12v7.12h-7.12zM85.69 21.26h7.12v7.12h-7.12zM99.93 21.26h7.12v7.12h-7.12zM114.17 21.26h7.12v7.12h-7.12zM128.41 21.26h7.12v7.12h-7.12zM142.65 21.26h7.12v7.12h-7.12zM156.89 21.26h7.12v7.12h-7.12zM171.13 21.26h7.12v7.12h-7.12zM185.37 21.26h7.12v7.12h-7.12zM199.61 21.26h7.12v7.12h-7.12zM213.85 21.26h7.12v7.12h-7.12zM228.09 21.26h7.12v7.12h-7.12zM242.33 21.26h7.12v7.12h-7.12zM256.57 21.26h7.12v7.12h-7.12zM270.81 21.26h7.12v7.12h-7.12zM285.05 21.26h7.12v7.12h-7.12zM299.29 21.26h7.12v7.12h-7.12zM313.53 21.26h7.12v7.12h-7.12zM327.77 21.26h7.12v7.12h-7.12zM342.01 21.26h7.12v7.12h-7.12zM356.25 21.26h7.12v7.12h-7.12zM370.49 21.26h7.12v7.12h-7.12zM384.73 21.26h7.12v7.12h-7.12zM398.97 21.26h7.12v7.12h-7.12zM413.21 21.26h7.12v7.12h-7.12zM7.37 28.38h7.12v7.12h-7.12zM21.61 28.38h7.12v7.12h-7.12zM35.85 28.38h7.12v7.12h-7.12zM50.09 28.38h7.12v7.12h-7.12zM64.33 28.38h7.12v7.12h-7.12zM78.57 28.38h7.12v7.12h-7.12zM92.81 28.38h7.12v7.12h-7.12zM107.05 28.38h7.12v7.12h-7.12zM121.29 28.38h7.12v7.12h-7.12zM135.53 28.38h7.12v7.12h-7.12zM149.77 28.38h7.12v7.12h-7.12zM164.01 28.38h7.12v7.12h-7.12zM178.25 28.38h7.12v7.12h-7.12zM192.49 28.38h7.12v7.12h-7.12zM206.73 28.38h7.12v7.12h-7.12zM220.97 28.38h7.12v7.12h-7.12zM235.21 28.38h7.12v7.12h-7.12zM249.45 28.38h7.12v7.12h-7.12zM263.69 28.38h7.12v7.12h-7.12zM277.93 28.38h7.12v7.12h-7.12zM292.17 28.38h7.12v7.12h-7.12zM306.41 28.38h7.12v7.12h-7.12zM320.65 28.38h7.12v7.12h-7.12zM334.89 28.38h7.12v7.12h-7.12zM349.13 28.38h7.12v7.12h-7.12zM363.37 28.38h7.12v7.12h-7.12zM377.61 28.38h7.12v7.12h-7.12zM391.85 28.38h7.12v7.12h-7.12zM406.09 28.38h7.12v7.12h-7.12zM0.25 35.50h7.12v7.12h-7.12zM14.49 35.50h7.12v7.12h-7.12zM28.73 35.50h7.12v7.12h-7.12zM42.97 35.50h7.12v7.12h-7.12zM57.21 35.50h7.12v7.12h-7.12zM71.45 35.50h7.12v7.12h-7.12zM85.69 35.50h7.12v7.12h-7.12zM99.93 35.50h7.12v7.12h-7.12zM114.17 35.50h7.12v7.12h-7.12zM128.41 35.50h7.12v7.12h-7.12zM142.65 35.50h7.12v7.12h-7.12zM156.89 35.50h7.12v7.12h-7.12zM171.13 35.50h7.12v7.12h-7.12zM185.37 35.50h7.12v7.12h-7.12zM199.61 35.50h7.12v7.12h-7.12zM213.85 35.50h7.12v7.12h-7.12zM228.09 35.50h7.12v7.12h-7.12zM242.33 35.50h7.12v7.12h-7.12zM256.57 35.50h7.12v7.12h-7.12zM270.81 35.50h7.12v7.12h-7.12zM285.05 35.50h7.12v7.12h-7.12zM299.29 35.50h7.12v7.12h-7.12zM313.53 35.50h7.12v7.12h-7.12zM327.77 35.50h7.12v7.12h-7.12zM342.01 35.50h7.12v7.12h-7.12zM356.25 35.50h7.12v7.12h-7.12zM370.49 35.50h7.12v7.12h-7.12zM384.73 35.50h7.12v7.12h-7.12zM398.97 35.50h7.12v7.12h-7.12zM413.21 35.50h7.12v7.12h-7.12zM7.37 42.62h7.12v7.12h-7.12zM21.61 42.62h7.12v7.12h-7.12zM35.85 42.62h7.12v7.12h-7.12zM50.09 42.62h7.12v7.12h-7.12zM64.33 42.62h7.12v7.12h-7.12zM78.57 42.62h7.12v7.12h-7.12zM92.81 42.62h7.12v7.12h-7.12zM107.05 42.62h7.12v7.12h-7.12zM121.29 42.62h7.12v7.12h-7.12zM135.53 42.62h7.12v7.12h-7.12zM149.77 42.62h7.12v7.12h-7.12zM164.01 42.62h7.12v7.12h-7.12zM178.25 42.62h7.12v7.12h-7.12zM192.49 42.62h7.12v7.12h-7.12zM206.73 42.62h7.12v7.12h-7.12zM220.97 42.62h7.12v7.12h-7.12zM235.21 42.62h7.12v7.12h-7.12zM249.45 42.62h7.12v7.12h-7.12zM263.69 42.62h7.12v7.12h-7.12zM277.93 42.62h7.12v7.12h-7.12zM292.17 42.62h7.12v7.12h-7.12zM306.41 42.62h7.12v7.12h-7.12zM320.65 42.62h7.12v7.12h-7.12zM334.89 42.62h7.12v7.12h-7.12zM349.13 42.62h7.12v7.12h-7.12zM363.37 42.62h7.12v7.12h-7.12zM377.61 42.62h7.12v7.12h-7.12zM391.85 42.62h7.12v7.12h-7.12zM406.09 42.62h7.12v7.12h-7.12zM0.25 49.74h7.12v7.12h-7.12zM14.49 49.74h7.12v7.12h-7.12zM28.73 49.74h7.12v7.12h-7.12zM42.97 49.74h7.12v7.12h-7.12zM57.21 49.74h7.12v7.12h-7.12zM71.45 49.74h7.12v7.12h-7.12zM85.69 49.74h7.12v7.12h-7.12zM99.93 49.74h7.12v7.12h-7.12zM114.17 49.74h7.12v7.12h-7.12zM128.41 49.74h7.12v7.12h-7.12zM142.65 49.74h7.12v7.12h-7.12zM156.89 49.74h7.12v7.12h-7.12zM171.13 49.74h7.12v7.12h-7.12zM185.37 49.74h7.12v7.12h-7.12zM199.61 49.74h7.12v7.12h-7.12zM213.85 49.74h7.12v7.12h-7.12zM228.09 49.74h7.12v7.12h-7.12zM242.33 49.74h7.12v7.12h-7.12zM256.57 49.74h7.12v7.12h-7.12zM270.81 49.74h7.12v7.12h-7.12zM285.05 49.74h7.12v7.12h-7.12zM299.29 49.74h7.12v7.12h-7.12zM313.53 49.74h7.12v7.12h-7.12zM327.77 49.74h7.12v7.12h-7.12zM342.01 49.74h7.12v7.12h-7.12zM356.25 49.74h7.12v7.12h-7.12zM370.49 49.74h7.12v7.12h-7.12zM384.73 49.74h7.12v7.12h-7.12zM398.97 49.74h7.12v7.12h-7.12zM413.21 49.74h7.12v7.12h-7.12zM7.37 56.86h7.12v7.12h-7.12zM21.61 56.86h7.12v7.12h-7.12zM35.85 56.86h7.12v7.12h-7.12zM50.09 56.86h7.12v7.12h-7.12zM64.33 56.86h7.12v7.12h-7.12zM78.57 56.86h7.12v7.12h-7.12zM92.81 56.86h7.12v7.12h-7.12zM107.05 56.86h7.12v7.12h-7.12zM121.29 56.86h7.12v7.12h-7.12zM135.53 56.86h7.12v7.12h-7.12zM149.77 56.86h7.12v7.12h-7.12zM164.01 56.86h7.12v7.12h-7.12zM178.25 56.86h7.12v7.12h-7.12zM192.49 56.86h7.12v7.12h-7.12zM206.73 56.86h7.12v7.12h-7.12zM220.97 56.86h7.12v7.12h-7.12zM235.21 56.86h7.12v7.12h-7.12zM249.45 56.86h7.12v7.12h-7.12zM263.69 56.86h7.12v7.12h-7.12zM277.93 56.86h7.12v7.12h-7.12zM292.17 56.86h7.12v7.12h-7.12zM306.41 56.86h7.12v7.12h-7.12zM320.65 56.86h7.12v7.12h-7.12zM334.89 56.86h7.12v7.12h-7.12zM349.13 56.86h7.12v7.12h-7.12zM363.37 56.86h7.12v7.12h-7.12zM377.61 56.86h7.12v7.12h-7.12zM391.85 56.86h7.12v7.12h-7.12zM406.09 56.86h7.12v7.12h-7.12zM0.25 63.98h7.12v7.12h-7.12zM14.49 63.98h7.12v7.12h-7.12zM28.73 63.98h7.12v7.12h-7.12zM42.97 63.98h7.12v7.12h-7.12zM57.21 63.98h7.12v7.12h-7.12zM71.45 63.98h7.12v7.12h-7.12zM85.69 63.98h7.12v7.12h-7.12zM99.93 63.98h7.12v7.12h-7.12zM114.17 63.98h7.12v7.12h-7.12zM128.41 63.98h7.12v7.12h-7.12zM142.65 63.98h7.12v7.12h-7.12zM156.89 63.98h7.12v7.12h-7.12zM171.13 63.98h7.12v7.12h-7.12zM185.37 63.98h7.12v7.12h-7.12zM199.61 63.98h7.12v7.12h-7.12zM213.85 63.98h7.12v7.12h-7.12zM228.09 63.98h7.12v7.12h-7.12zM242.33 63.98h7.12v7.12h-7.12zM256.57 63.98h7.12v7.12h-7.12zM270.81 63.98h7.12v7.12h-7.12zM285.05 63.98h7.12v7.12h-7.12zM299.29 63.98h7.12v7.12h-7.12zM313.53 63.98h7.12v7.12h-7.12zM327.77 63.98h7.12v7.12h-7.12zM342.01 63.98h7.12v7.12h-7.12zM356.25 63.98h7.12v7.12h-7.12zM370.49 63.98h7.12v7.12h-7.12zM384.73 63.98h7.12v7.12h-7.12zM398.97 63.98h7.12v7.12h-7.12zM413.21 63.98h7.12v7.12h-7.12zM7.37 71.10h7.12v7.12h-7.12zM21.61 71.10h7.12v7.12h-7.12zM35.85 71.10h7.12v7.12h-7.12zM50.09 71.10h7.12v7.12h-7.12zM64.33 71.10h7.12v7.12h-7.12zM78.57 71.10h7.12v7.12h-7.12zM92.81 71.10h7.12v7.12h-7.12zM107.05 71.10h7.12v7.12h-7.12zM121.29 71.10h7.12v7.12h-7.12zM135.53 71.10h7.12v7.12h-7.12zM149.77 71.10h7.12v7.12h-7.12zM164.01 71.10h7.12v7.12h-7.12zM178.25 71.10h7.12v7.12h-7.12zM192.49 71.10h7.12v7.12h-7.12zM206.73 71.10h7.12v7.12h-7.12zM220.97 71.10h7.12v7.12h-7.12zM235.21 71.10h7.12v7.12h-7.12zM249.45 71.10h7.12v7.12h-7.12zM263.69 71.10h7.12v7.12h-7.12zM277.93 71.10h7.12v7.12h-7.12zM292.17 71.10h7.12v7.12h-7.12zM306.41 71.10h7.12v7.12h-7.12zM320.65 71.10h7.12v7.12h-7.12zM334.89 71.10h7.12v7.12h-7.12zM349.13 71.10h7.12v7.12h-7.12zM363.37 71.10h7.12v7.12h-7.12zM377.61 71.10h7.12v7.12h-7.12zM391.85 71.10h7.12v7.12h-7.12zM406.09 71.10h7.12v7.12h-7.12zM0.25 78.22h7.12v7.12h-7.12zM14.49 78.22h7.12v7.12h-7.12zM28.73 78.22h7.12v7.12h-7.12zM42.97 78.22h7.12v7.12h-7.12zM57.21 78.22h7.12v7.12h-7.12zM71.45 78.22h7.12v7.12h-7.12zM85.69 78.22h7.12v7.12h-7.12zM99.93 78.22h7.12v7.12h-7.12zM114.17 78.22h7.12v7.12h-7.12zM128.41 78.22h7.12v7.12h-7.12zM142.65 78.22h7.12v7.12h-7.12zM156.89 78.22h7.12v7.12h-7.12zM171.13 78.22h7.12v7.12h-7.12zM185.37 78.22h7.12v7.12h-7.12zM199.61 78.22h7.12v7.12h-7.12zM213.85 78.22h7.12v7.12h-7.12zM228.09 78.22h7.12v7.12h-7.12zM242.33 78.22h7.12v7.12h-7.12zM256.57 78.22h7.12v7.12h-7.12zM270.81 78.22h7.12v7.12h-7.12zM285.05 78.22h7.12v7.12h-7.12zM299.29 78.22h7.12v7.12h-7.12zM313.53 78.22h7.12v7.12h-7.12zM327.77 78.22h7.12v7.12h-7.12zM342.01 78.22h7.12v7.12h-7.12zM356.25 78.22h7.12v7.12h-7.12zM370.49 78.22h7.12v7.12h-7.12zM384.73 78.22h7.12v7.12h-7.12zM398.97 78.22h7.12v7.12h-7.12zM413.21 78.22h7.12v7.12h-7.12zM7.37 85.34h7.12v7.12h-7.12zM21.61 85.34h7.12v7.12h-7.12zM35.85 85.34h7.12v7.12h-7.12zM50.09 85.34h7.12v7.12h-7.12zM64.33 85.34h7.12v7.12h-7.12zM78.57 85.34h7.12v7.12h-7.12zM92.81 85.34h7.12v7.12h-7.12zM107.05 85.34h7.12v7.12h-7.12zM121.29 85.34h7.12v7.12h-7.12zM135.53 85.34h7.12v7.12h-7.12zM149.77 85.34h7.12v7.12h-7.12zM164.01 85.34h7.12v7.12h-7.12zM178.25 85.34h7.12v7.12h-7.12zM192.49 85.34h7.12v7.12h-7.12zM206.73 85.34h7.12v7.12h-7.12zM220.97 85.34h7.12v7.12h-7.12zM235.21 85.34h7.12v7.12h-7.12zM249.45 85.34h7.12v7.12h-7.12zM263.69 85.34h7.12v7.12h-7.12zM277.93 85.34h7.12v7.12h-7.12zM292.17 85.34h7.12v7.12h-7.12zM306.41 85.34h7.12v7.12h-7.12zM320.65 85.34h7.12v7.12h-7.12zM334.89 85.34h7.12v7.12h-7.12zM349.13 85.34h7.12v7.12h-7.12zM363.37 85.34h7.12v7.12h-7.12zM377.61 85.34h7.12v7.12h-7.12zM391.85 85.34h7.12v7.12h-7.12zM406.09 85.34h7.12v7.12h-7.12zM0.25 92.46h7.12v7.12h-7.12zM14.49 92.46h7.12v7.12h-7.12zM28.73 92.46h7.12v7.12h-7.12zM42.97 92.46h7.12v7.12h-7.12zM57.21 92.46h7.12v7.12h-7.12zM71.45 92.46h7.12v7.12h-7.12zM85.69 92.46h7.12v7.12h-7.12zM99.93 92.46h7.12v7.12h-7.12zM114.17 92.46h7.12v7.12h-7.12zM128.41 92.46h7.12v7.12h-7.12zM142.65 92.46h7.12v7.12h-7.12zM156.89 92.46h7.12v7.12h-7.12zM171.13 92.46h7.12v7.12h-7.12zM185.37 92.46h7.12v7.12h-7.12zM199.61 92.46h7.12v7.12h-7.12zM213.85 92.46h7.12v7.12h-7.12zM228.09 92.46h7.12v7.12h-7.12zM242.33 92.46h7.12v7.12h-7.12zM256.57 92.46h7.12v7.12h-7.12zM270.81 92.46h7.12v7.12h-7.12zM285.05 92.46h7.12v7.12h-7.12zM299.29 92.46h7.12v7.12h-7.12zM313.53 92.46h7.12v7.12h-7.12zM327.77 92.46h7.12v7.12h-7.12zM342.01 92.46h7.12v7.12h-7.12zM356.25 92.46h7.12v7.12h-7.12zM370.49 92.46h7.12v7.12h-7.12zM384.73 92.46h7.12v7.12h-7.12zM398.97 92.46h7.12v7.12h-7.12zM413.21 92.46h7.12v7.12h-7.12zM7.37 99.58h7.12v7.12h-7.12zM21.61 99.58h7.12v7.12h-7.12zM35.85 99.58h7.12v7.12h-7.12zM50.09 99.58h7.12v7.12h-7.12zM64.33 99.58h7.12v7.12h-7.12zM78.57 99.58h7.12v7.12h-7.12zM92.81 99.58h7.12v7.12h-7.12zM107.05 99.58h7.12v7.12h-7.12zM121.29 99.58h7.12v7.12h-7.12zM135.53 99.58h7.12v7.12h-7.12zM149.77 99.58h7.12v7.12h-7.12zM164.01 99.58h7.12v7.12h-7.12zM178.25 99.58h7.12v7.12h-7.12zM192.49 99.58h7.12v7.12h-7.12zM206.73 99.58h7.12v7.12h-7.12zM220.97 99.58h7.12v7.12h-7.12zM235.21 99.58h7.12v7.12h-7.12zM249.45 99.58h7.12v7.12h-7.12zM263.69 99.58h7.12v7.12h-7.12zM277.93 99.58h7.12v7.12h-7.12zM292.17 99.58h7.12v7.12h-7.12zM306.41 99.58h7.12v7.12h-7.12zM320.65 99.58h7.12v7.12h-7.12zM334.89 99.58h7.12v7.12h-7.12zM349.13 99.58h7.12v7.12h-7.12zM363.37 99.58h7.12v7.12h-7.12zM377.61 99.58h7.12v7.12h-7.12zM391.85 99.58h7.12v7.12h-7.12zM406.09 99.58h7.12v7.12h-7.12zM0.25 106.70h7.12v7.12h-7.12zM14.49 106.70h7.12v7.12h-7.12zM28.73 106.70h7.12v7.12h-7.12zM42.97 106.70h7.12v7.12h-7.12zM57.21 106.70h7.12v7.12h-7.12zM71.45 106.70h7.12v7.12h-7.12zM85.69 106.70h7.12v7.12h-7.12zM99.93 106.70h7.12v7.12h-7.12zM114.17 106.70h7.12v7.12h-7.12zM128.41 106.70h7.12v7.12h-7.12zM142.65 106.70h7.12v7.12h-7.12zM156.89 106.70h7.12v7.12h-7.12zM171.13 106.70h7.12v7.12h-7.12zM185.37 106.70h7.12v7.12h-7.12zM199.61 106.70h7.12v7.12h-7.12zM213.85 106.70h7.12v7.12h-7.12zM228.09 106.70h7.12v7.12h-7.12zM242.33 106.70h7.12v7.12h-7.12zM256.57 106.70h7.12v7.12h-7.12zM270.81 106.70h7.12v7.12h-7.12zM285.05 106.70h7.12v7.12h-7.12zM299.29 106.70h7.12v7.12h-7.12zM313.53 106.70h7.12v7.12h-7.12zM327.77 106.70h7.12v7.12h-7.12zM342.01 106.70h7.12v7.12h-7.12zM356.25 106.70h7.12v7.12h-7.12zM370.49 106.70h7.12v7.12h-7.12zM384.73 106.70h7.12v7.12h-7.12zM398.97 106.70h7.12v7.12h-7.12zM413.21 106.70h7.12v7.12h-7.12zM7.37 113.82h7.12v7.12h-7.12zM21.61 113.82h7.12v7.12h-7.12zM35.85 113.82h7.12v7.12h-7.12zM50.09 113.82h7.12v7.12h-7.12zM64.33 113.82h7.12v7.12h-7.12zM78.57 113.82h7.12v7.12h-7.12zM92.81 113.82h7.12v7.12h-7.12zM107.05 113.82h7.12v7.12h-7.12zM121.29 113.82h7.12v7.12h-7.12zM135.53 113.82h7.12v7.12h-7.12zM149.77 113.82h7.12v7.12h-7.12zM164.01 113.82h7.12v7.12h-7.12zM178.25 113.82h7.12v7.12h-7.12zM192.49 113.82h7.12v7.12h-7.12zM206.73 113.82h7.12v7.12h-7.12zM220.97 113.82h7.12v7.12h-7.12zM235.21 113.82h7.12v7.12h-7.12zM249.45 113.82h7.12v7.12h-7.12zM263.69 113.82h7.12v7.12h-7.12zM277.93 113.82h7.12v7.12h-7.12zM292.17 113.82h7.12v7.12h-7.12zM306.41 113.82h7.12v7.12h-7.12zM320.65 113.82h7.12v7.12h-7.12zM334.89 113.82h7.12v7.12h-7.12zM349.13 113.82h7.12v7.12h-7.12zM363.37 113.82h7.12v7.12h-7.12zM377.61 113.82h7.12v7.12h-7.12zM391.85 113.82h7.12v7.12h-7.12zM406.09 113.82h7.12v7.12h-7.12zM0.25 120.94h7.12v7.12h-7.12zM14.49 120.94h7.12v7.12h-7.12zM28.73 120.94h7.12v7.12h-7.12zM42.97 120.94h7.12v7.12h-7.12zM57.21 120.94h7.12v7.12h-7.12zM71.45 120.94h7.12v7.12h-7.12zM85.69 120.94h7.12v7.12h-7.12zM99.93 120.94h7.12v7.12h-7.12zM114.17 120.94h7.12v7.12h-7.12zM128.41 120.94h7.12v7.12h-7.12zM142.65 120.94h7.12v7.12h-7.12zM156.89 120.94h7.12v7.12h-7.12zM171.13 120.94h7.12v7.12h-7.12zM185.37 120.94h7.12v7.12h-7.12zM199.61 120.94h7.12v7.12h-7.12zM213.85 120.94h7.12v7.12h-7.12zM228.09 120.94h7.12v7.12h-7.12zM242.33 120.94h7.12v7.12h-7.12zM256.57 120.94h7.12v7.12h-7.12zM270.81 120.94h7.12v7.12h-7.12zM285.05 120.94h7.12v7.12h-7.12zM299.29 120.94h7.12v7.12h-7.12zM313.53 120.94h7.12v7.12h-7.12zM327.77 120.94h7.12v7.12h-7.12zM342.01 120.94h7.12v7.12h-7.12zM356.25 120.94h7.12v7.12h-7.12zM370.49 120.94h7.12v7.12h-7.12zM384.73 120.94h7.12v7.12h-7.12zM398.97 120.94h7.12v7.12h-7.12zM413.21 120.94h7.12v7.12h-7.12zM7.37 128.06h7.12v7.12h-7.12zM21.61 128.06h7.12v7.12h-7.12zM35.85 128.06h7.12v7.12h-7.12zM50.09 128.06h7.12v7.12h-7.12zM64.33 128.06h7.12v7.12h-7.12zM78.57 128.06h7.12v7.12h-7.12zM92.81 128.06h7.12v7.12h-7.12zM107.05 128.06h7.12v7.12h-7.12zM121.29 128.06h7.12v7.12h-7.12zM135.53 128.06h7.12v7.12h-7.12zM149.77 128.06h7.12v7.12h-7.12zM164.01 128.06h7.12v7.12h-7.12zM178.25 128.06h7.12v7.12h-7.12zM192.49 128.06h7.12v7.12h-7.12zM206.73 128.06h7.12v7.12h-7.12zM220.97 128.06h7.12v7.12h-7.12zM235.21 128.06h7.12v7.12h-7.12zM249.45 128.06h7.12v7.12h-7.12zM263.69 128.06h7.12v7.12h-7.12zM277.93 128.06h7.12v7.12h-7.12zM292.17 128.06h7.12v7.12h-7.12zM306.41 128.06h7.12v7.12h-7.12zM320.65 128.06h7.12v7.12h-7.12zM334.89 128.06h7.12v7.12h-7.12zM349.13 128.06h7.12v7.12h-7.12zM363.37 128.06h7.12v7.12h-7.12zM377.61 128.06h7.12v7.12h-7.12zM391.85 128.06h7.12v7.12h-7.12zM406.09 128.06h7.12v7.12h-7.12zM0.25 135.18h7.12v7.12h-7.12zM14.49 135.18h7.12v7.12h-7.12zM28.73 135.18h7.12v7.12h-7.12zM42.97 135.18h7.12v7.12h-7.12zM57.21 135.18h7.12v7.12h-7.12zM71.45 135.18h7.12v7.12h-7.12zM85.69 135.18h7.12v7.12h-7.12zM99.93 135.18h7.12v7.12h-7.12zM114.17 135.18h7.12v7.12h-7.12zM128.41 135.18h7.12v7.12h-7.12zM142.65 135.18h7.12v7.12h-7.12zM156.89 135.18h7.12v7.12h-7.12zM171.13 135.18h7.12v7.12h-7.12zM185.37 135.18h7.12v7.12h-7.12zM199.61 135.18h7.12v7.12h-7.12zM213.85 135.18h7.12v7.12h-7.12zM228.09 135.18h7.12v7.12h-7.12zM242.33 135.18h7.12v7.12h-7.12zM256.57 135.18h7.12v7.12h-7.12zM270.81 135.18h7.12v7.12h-7.12zM285.05 135.18h7.12v7.12h-7.12zM299.29 135.18h7.12v7.12h-7.12zM313.53 135.18h7.12v7.12h-7.12zM327.77 135.18h7.12v7.12h-7.12zM342.01 135.18h7.12v7.12h-7.12zM356.25 135.18h7.12v7.12h-7.12zM370.49 135.18h7.12v7.12h-7.12zM384.73 135.18h7.12v7.12h-7.12zM398.97 135.18h7.12v7.12h-7.12zM413.21 135.18h7.12v7.12h-7.12zM7.37 142.30h7.12v7.12h-7.12zM21.61 142.30h7.12v7.12h-7.12zM35.85 142.30h7.12v7.12h-7.12zM50.09 142.30h7.12v7.12h-7.12zM64.33 142.30h7.12v7.12h-7.12zM78.57 142.30h7.12v7.12h-7.12zM92.81 142.30h7.12v7.12h-7.12zM107.05 142.30h7.12v7.12h-7.12zM121.29 142.30h7.12v7.12h-7.12zM135.53 142.30h7.12v7.12h-7.12zM149.77 142.30h7.12v7.12h-7.12zM164.01 142.30h7.12v7.12h-7.12zM178.25 142.30h7.12v7.12h-7.12zM192.49 142.30h7.12v7.12h-7.12zM206.73 142.30h7.12v7.12h-7.12zM220.97 142.30h7.12v7.12h-7.12zM235.21 142.30h7.12v7.12h-7.12zM249.45 142.30h7.12v7.12h-7.12zM263.69 142.30h7.12v7.12h-7.12zM277.93 142.30h7.12v7.12h-7.12zM292.17 142.30h7.12v7.12h-7.12zM306.41 142.30h7.12v7.12h-7.12zM320.65 142.30h7.12v7.12h-7.12zM334.89 142.30h7.12v7.12h-7.12zM349.13 142.30h7.12v7.12h-7.12zM363.37 142.30h7.12v7.12h-7.12zM377.61 142.30h7.12v7.12h-7.12zM391.85 142.30h7.12v7.12h-7.12zM406.09 142.30h7.12v7.12h-7.12zM0.25 149.42h7.12v7.12h-7.12zM14.49 149.42h7.12v7.12h-7.12zM28.73 149.42h7.12v7.12h-7.12zM42.97 149.42h7.12v7.12h-7.12zM57.21 149.42h7.12v7.12h-7.12zM71.45 149.42h7.12v7.12h-7.12zM85.69 149.42h7.12v7.12h-7.12zM99.93 149.42h7.12v7.12h-7.12zM114.17 149.42h7.12v7.12h-7.12zM128.41 149.42h7.12v7.12h-7.12zM142.65 149.42h7.12v7.12h-7.12zM156.89 149.42h7.12v7.12h-7.12zM171.13 149.42h7.12v7.12h-7.12zM185.37 149.42h7.12v7.12h-7.12zM199.61 149.42h7.12v7.12h-7.12zM213.85 149.42h7.12v7.12h-7.12zM228.09 149.42h7.12v7.12h-7.12zM242.33 149.42h7.12v7.12h-7.12zM256.57 149.42h7.12v7.12h-7.12zM270.81 149.42h7.12v7.12h-7.12zM285.05 149.42h7.12v7.12h-7.12zM299.29 149.42h7.12v7.12h-7.12zM313.53 149.42h7.12v7.12h-7.12zM327.77 149.42h7.12v7.12h-7.12zM342.01 149.42h7.12v7.12h-7.12zM356.25 149.42h7.12v7.12h-7.12zM370.49 149.42h7.12v7.12h-7.12zM384.73 149.42h7.12v7.12h-7.12zM398.97 149.42h7.12v7.12h-7.12zM413.21 149.42h7.12v7.12h-7.12zM7.37 156.54h7.12v7.12h-7.12zM21.61 156.54h7.12v7.12h-7.12zM35.85 156.54h7.12v7.12h-7.12zM50.09 156.54h7.12v7.12h-7.12zM64.33 156.54h7.12v7.12h-7.12zM78.57 156.54h7.12v7.12h-7.12zM92.81 156.54h7.12v7.12h-7.12zM107.05 156.54h7.12v7.12h-7.12zM121.29 156.54h7.12v7.12h-7.12zM135.53 156.54h7.12v7.12h-7.12zM149.77 156.54h7.12v7.12h-7.12zM164.01 156.54h7.12v7.12h-7.12zM178.25 156.54h7.12v7.12h-7.12zM192.49 156.54h7.12v7.12h-7.12zM206.73 156.54h7.12v7.12h-7.12zM220.97 156.54h7.12v7.12h-7.12zM235.21 156.54h7.12v7.12h-7.12zM249.45 156.54h7.12v7.12h-7.12zM263.69 156.54h7.12v7.12h-7.12zM277.93 156.54h7.12v7.12h-7.12zM292.17 156.54h7.12v7.12h-7.12zM306.41 156.54h7.12v7.12h-7.12zM320.65 156.54h7.12v7.12h-7.12zM334.89 156.54h7.12v7.12h-7.12zM349.13 156.54h7.12v7.12h-7.12zM363.37 156.54h7.12v7.12h-7.12zM377.61 156.54h7.12v7.12h-7.12zM391.85 156.54h7.12v7.12h-7.12zM406.09 156.54h7.12v7.12h-7.12zM0.25 163.66h7.12v7.12h-7.12zM14.49 163.66h7.12v7.12h-7.12zM28.73 163.66h7.12v7.12h-7.12zM42.97 163.66h7.12v7.12h-7.12zM57.21 163.66h7.12v7.12h-7.12zM71.45 163.66h7.12v7.12h-7.12zM85.69 163.66h7.12v7.12h-7.12zM99.93 163.66h7.12v7.12h-7.12zM114.17 163.66h7.12v7.12h-7.12zM128.41 163.66h7.12v7.12h-7.12zM142.65 163.66h7.12v7.12h-7.12zM156.89 163.66h7.12v7.12h-7.12zM171.13 163.66h7.12v7.12h-7.12zM185.37 163.66h7.12v7.12h-7.12zM199.61 163.66h7.12v7.12h-7.12zM213.85 163.66h7.12v7.12h-7.12zM228.09 163.66h7.12v7.12h-7.12zM242.33 163.66h7.12v7.12h-7.12zM256.57 163.66h7.12v7.12h-7.12zM270.81 163.66h7.12v7.12h-7.12zM285.05 163.66h7.12v7.12h-7.12zM299.29 163.66h7.12v7.12h-7.12zM313.53 163.66h7.12v7.12h-7.12zM327.77 163.66h7.12v7.12h-7.12zM342.01 163.66h7.12v7.12h-7.12zM356.25 163.66h7.12v7.12h-7.12zM370.49 163.66h7.12v7.12h-7.12zM384.73 163.66h7.12v7.12h-7.12zM398.97 163.66h7.12v7.12h-7.12zM413.21 163.66h7.12v7.12h-7.12zM7.37 170.78h7.12v7.12h-7.12zM21.61 170.78h7.12v7.12h-7.12zM35.85 170.78h7.12v7.12h-7.12zM50.09 170.78h7.12v7.12h-7.12zM64.33 170.78h7.12v7.12h-7.12zM78.57 170.78h7.12v7.12h-7.12zM92.81 170.78h7.12v7.12h-7.12zM107.05 170.78h7.12v7.12h-7.12zM121.29 170.78h7.12v7.12h-7.12zM135.53 170.78h7.12v7.12h-7.12zM149.77 170.78h7.12v7.12h-7.12zM164.01 170.78h7.12v7.12h-7.12zM178.25 170.78h7.12v7.12h-7.12zM192.49 170.78h7.12v7.12h-7.12zM206.73 170.78h7.12v7.12h-7.12zM220.97 170.78h7.12v7.12h-7.12zM235.21 170.78h7.12v7.12h-7.12zM249.45 170.78h7.12v7.12h-7.12zM263.69 170.78h7.12v7.12h-7.12zM277.93 170.78h7.12v7.12h-7.12zM292.17 170.78h7.12v7.12h-7.12zM306.41 170.78h7.12v7.12h-7.12zM320.65 170.78h7.12v7.12h-7.12zM334.89 170.78h7.12v7.12h-7.12zM349.13 170.78h7.12v7.12h-7.12zM363.37 170.78h7.12v7.12h-7.12zM377.61 170.78h7.12v7.12h-7.12zM391.85 170.78h7.12v7.12h-7.12zM406.09 170.78h7.12v7.12h-7.12zM0.25 177.90h7.12v7.12h-7.12zM14.49 177.90h7.12v7.12h-7.12zM28.73 177.90h7.12v7.12h-7.12zM42.97 177.90h7.12v7.12h-7.12zM57.21 177.90h7.12v7.12h-7.12zM71.45 177.90h7.12v7.12h-7.12zM85.69 177.90h7.12v7.12h-7.12zM99.93 177.90h7.12v7.12h-7.12zM114.17 177.90h7.12v7.12h-7.12zM128.41 177.90h7.12v7.12h-7.12zM142.65 177.90h7.12v7.12h-7.12zM156.89 177.90h7.12v7.12h-7.12zM171.13 177.90h7.12v7.12h-7.12zM185.37 177.90h7.12v7.12h-7.12zM199.61 177.90h7.12v7.12h-7.12zM213.85 177.90h7.12v7.12h-7.12zM228.09 177.90h7.12v7.12h-7.12zM242.33 177.90h7.12v7.12h-7.12zM256.57 177.90h7.12v7.12h-7.12zM270.81 177.90h7.12v7.12h-7.12zM285.05 177.90h7.12v7.12h-7.12zM299.29 177.90h7.12v7.12h-7.12zM313.53 177.90h7.12v7.12h-7.12zM327.77 177.90h7.12v7.12h-7.12zM342.01 177.90h7.12v7.12h-7.12zM356.25 177.90h7.12v7.12h-7.12zM370.49 177.90h7.12v7.12h-7.12zM384.73 177.90h7.12v7.12h-7.12zM398.97 177.90h7.12v7.12h-7.12zM413.21 177.90h7.12v7.12h-7.12zM7.37 185.02h7.12v7.12h-7.12zM21.61 185.02h7.12v7.12h-7.12zM35.85 185.02h7.12v7.12h-7.12zM50.09 185.02h7.12v7.12h-7.12zM64.33 185.02h7.12v7.12h-7.12zM78.57 185.02h7.12v7.12h-7.12zM92.81 185.02h7.12v7.12h-7.12zM107.05 185.02h7.12v7.12h-7.12zM121.29 185.02h7.12v7.12h-7.12zM135.53 185.02h7.12v7.12h-7.12zM149.77 185.02h7.12v7.12h-7.12zM164.01 185.02h7.12v7.12h-7.12zM178.25 185.02h7.12v7.12h-7.12zM192.49 185.02h7.12v7.12h-7.12zM206.73 185.02h7.12v7.12h-7.12zM220.97 185.02h7.12v7.12h-7.12zM235.21 185.02h7.12v7.12h-7.12zM249.45 185.02h7.12v7.12h-7.12zM263.69 185.02h7.12v7.12h-7.12zM277.93 185.02h7.12v7.12h-7.12zM292.17 185.02h7.12v7.12h-7.12zM306.41 185.02h7.12v7.12h-7.12zM320.65 185.02h7.12v7.12h-7.12zM334.89 185.02h7.12v7.12h-7.12zM349.13 185.02h7.12v7.12h-7.12zM363.37 185.02h7.12v7.12h-7.12zM377.61 185.02h7.12v7.12h-7.12zM391.85 185.02h7.12v7.12h-7.12zM406.09 185.02h7.12v7.12h-7.12zM0.25 192.14h7.12v7.12h-7.12zM14.49 192.14h7.12v7.12h-7.12zM28.73 192.14h7.12v7.12h-7.12zM42.97 192.14h7.12v7.12h-7.12zM57.21 192.14h7.12v7.12h-7.12zM71.45 192.14h7.12v7.12h-7.12zM85.69 192.14h7.12v7.12h-7.12zM99.93 192.14h7.12v7.12h-7.12zM114.17 192.14h7.12v7.12h-7.12zM128.41 192.14h7.12v7.12h-7.12zM142.65 192.14h7.12v7.12h-7.12zM156.89 192.14h7.12v7.12h-7.12zM171.13 192.14h7.12v7.12h-7.12zM185.37 192.14h7.12v7.12h-7.12zM199.61 192.14h7.12v7.12h-7.12zM213.85 192.14h7.12v7.12h-7.12zM228.09 192.14h7.12v7.12h-7.12zM242.33 192.14h7.12v7.12h-7.12zM256.57 192.14h7.12v7.12h-7.12zM270.81 192.14h7.12v7.12h-7.12zM285.05 192.14h7.12v7.12h-7.12zM299.29 192.14h7.12v7.12h-7.12zM313.53 192.14h7.12v7.12h-7.12zM327.77 192.14h7.12v7.12h-7.12zM342.01 192.14h7.12v7.12h-7.12zM356.25 192.14h7.12v7.12h-7.12zM370.49 192.14h7.12v7.12h-7.12zM384.73 192.14h7.12v7.12h-7.12zM398.97 192.14h7.12v7.12h-7.12zM413.21 192.14h7.12v7.12h-7.12zM7.37 199.26h7.12v7.12h-7.12zM21.61 199.26h7.12v7.12h-7.12zM35.85 199.26h7.12v7.12h-7.12zM50.09 199.26h7.12v7.12h-7.12zM64.33 199.26h7.12v7.12h-7.12zM78.57 199.26h7.12v7.12h-7.12zM92.81 199.26h7.12v7.12h-7.12zM107.05 199.26h7.12v7.12h-7.12zM121.29 199.26h7.12v7.12h-7.12zM135.53 199.26h7.12v7.12h-7.12zM149.77 199.26h7.12v7.12h-7.12zM164.01 199.26h7.12v7.12h-7.12zM178.25 199.26h7.12v7.12h-7.12zM192.49 199.26h7.12v7.12h-7.12zM206.73 199.26h7.12v7.12h-7.12zM220.97 199.26h7.12v7.12h-7.12zM235.21 199.26h7.12v7.12h-7.12zM249.45 199.26h7.12v7.12h-7.12zM263.69 199.26h7.12v7.12h-7.12zM277.93 199.26h7.12v7.12h-7.12zM292.17 199.26h7.12v7.12h-7.12zM306.41 199.26h7.12v7.12h-7.12zM320.65 199.26h7.12v7.12h-7.12zM334.89 199.26h7.12v7.12h-7.12zM349.13 199.26h7.12v7.12h-7.12zM363.37 199.26h7.12v7.12h-7.12zM377.61 199.26h7.12v7.12h-7.12zM391.85 199.26h7.12v7.12h-7.12zM406.09 199.26h7.12v7.12h-7.12zM0.25 206.38h7.12v7.12h-7.12zM14.49 206.38h7.12v7.12h-7.12zM28.73 206.38h7.12v7.12h-7.12zM42.97 206.38h7.12v7.12h-7.12zM57.21 206.38h7.12v7.12h-7.12zM71.45 206.38h7.12v7.12h-7.12zM85.69 206.38h7.12v7.12h-7.12zM99.93 206.38h7.12v7.12h-7.12zM114.17 206.38h7.12v7.12h-7.12zM128.41 206.38h7.12v7.12h-7.12zM142.65 206.38h7.12v7.12h-7.12zM156.89 206.38h7.12v7.12h-7.12zM171.13 206.38h7.12v7.12h-7.12zM185.37 206.38h7.12v7.12h-7.12zM199.61 206.38h7.12v7.12h-7.12zM213.85 206.38h7.12v7.12h-7.12zM228.09 206.38h7.12v7.12h-7.12zM242.33 206.38h7.12v7.12h-7.12zM256.57 206.38h7.12v7.12h-7.12zM270.81 206.38h7.12v7.12h-7.12zM285.05 206.38h7.12v7.12h-7.12zM299.29 206.38h7.12v7.12h-7.12zM313.53 206.38h7.12v7.12h-7.12zM327.77 206.38h7.12v7.12h-7.12zM342.01 206.38h7.12v7.12h-7.12zM356.25 206.38h7.12v7.12h-7.12zM370.49 206.38h7.12v7.12h-7.12zM384.73 206.38h7.12v7.12h-7.12zM398.97 206.38h7.12v7.12h-7.12zM413.21 206.38h7.12v7.12h-7.12zM7.37 213.50h7.12v7.12h-7.12zM21.61 213.50h7.12v7.12h-7.12zM35.85 213.50h7.12v7.12h-7.12zM50.09 213.50h7.12v7.12h-7.12zM64.33 213.50h7.12v7.12h-7.12zM78.57 213.50h7.12v7.12h-7.12zM92.81 213.50h7.12v7.12h-7.12zM107.05 213.50h7.12v7.12h-7.12zM121.29 213.50h7.12v7.12h-7.12zM135.53 213.50h7.12v7.12h-7.12zM149.77 213.50h7.12v7.12h-7.12zM164.01 213.50h7.12v7.12h-7.12zM178.25 213.50h7.12v7.12h-7.12zM192.49 213.50h7.12v7.12h-7.12zM206.73 213.50h7.12v7.12h-7.12zM220.97 213.50h7.12v7.12h-7.12zM235.21 213.50h7.12v7.12h-7.12zM249.45 213.50h7.12v7.12h-7.12zM263.69 213.50h7.12v7.12h-7.12zM277.93 213.50h7.12v7.12h-7.12zM292.17 213.50h7.12v7.12h-7.12zM306.41 213.50h7.12v7.12h-7.12zM320.65 213.50h7.12v7.12h-7.12zM334.89 213.50h7.12v7.12h-7.12zM349.13 213.50h7.12v7.12h-7.12zM363.37 213.50h7.12v7.12h-7.12zM377.61 213.50h7.12v7.12h-7.12zM391.85 213.50h7.12v7.12h-7.12zM406.09 213.50h7.12v7.12h-7.12zM0.25 220.62h7.12v7.12h-7.12zM14.49 220.62h7.12v7.12h-7.12zM28.73 220.62h7.12v7.12h-7.12zM42.97 220.62h7.12v7.12h-7.12zM57.21 220.62h7.12v7.12h-7.12zM71.45 220.62h7.12v7.12h-7.12zM85.69 220.62h7.12v7.12h-7.12zM99.93 220.62h7.12v7.12h-7.12zM114.17 220.62h7.12v7.12h-7.12zM128.41 220.62h7.12v7.12h-7.12zM142.65 220.62h7.12v7.12h-7.12zM156.89 220.62h7.12v7.12h-7.12zM171.13 220.62h7.12v7.12h-7.12zM185.37 220.62h7.12v7.12h-7.12zM199.61 220.62h7.12v7.12h-7.12zM213.85 220.62h7.12v7.12h-7.12zM228.09 220.62h7.12v7.12h-7.12zM242.33 220.62h7.12v7.12h-7.12zM256.57 220.62h7.12v7.12h-7.12zM270.81 220.62h7.12v7.12h-7.12zM285.05 220.62h7.12v7.12h-7.12zM299.29 220.62h7.12v7.12h-7.12zM313.53 220.62h7.12v7.12h-7.12zM327.77 220.62h7.12v7.12h-7.12zM342.01 220.62h7.12v7.12h-7.12zM356.25 220.62h7.12v7.12h-7.12zM370.49 220.62h7.12v7.12h-7.12zM384.73 220.62h7.12v7.12h-7.12zM398.97 220.62h7.12v7.12h-7.12zM413.21 220.62h7.12v7.12h-7.12zM7.37 227.74h7.12v7.12h-7.12zM21.61 227.74h7.12v7.12h-7.12zM35.85 227.74h7.12v7.12h-7.12zM50.09 227.74h7.12v7.12h-7.12zM64.33 227.74h7.12v7.12h-7.12zM78.57 227.74h7.12v7.12h-7.12zM92.81 227.74h7.12v7.12h-7.12zM107.05 227.74h7.12v7.12h-7.12zM121.29 227.74h7.12v7.12h-7.12zM135.53 227.74h7.12v7.12h-7.12zM149.77 227.74h7.12v7.12h-7.12zM164.01 227.74h7.12v7.12h-7.12zM178.25 227.74h7.12v7.12h-7.12zM192.49 227.74h7.12v7.12h-7.12zM206.73 227.74h7.12v7.12h-7.12zM220.97 227.74h7.12v7.12h-7.12zM235.21 227.74h7.12v7.12h-7.12zM249.45 227.74h7.12v7.12h-7.12zM263.69 227.74h7.12v7.12h-7.12zM277.93 227.74h7.12v7.12h-7.12zM292.17 227.74h7.12v7.12h-7.12zM306.41 227.74h7.12v7.12h-7.12zM320.65 227.74h7.12v7.12h-7.12zM334.89 227.74h7.12v7.12h-7.12zM349.13 227.74h7.12v7.12h-7.12zM363.37 227.74h7.12v7.12h-7.12zM377.61 227.74h7.12v7.12h-7.12zM391.85 227.74h7.12v7.12h-7.12zM406.09 227.74h7.12v7.12h-7.12zM0.25 234.86h7.12v7.12h-7.12zM14.49 234.86h7.12v7.12h-7.12zM28.73 234.86h7.12v7.12h-7.12zM42.97 234.86h7.12v7.12h-7.12zM57.21 234.86h7.12v7.12h-7.12zM71.45 234.86h7.12v7.12h-7.12zM85.69 234.86h7.12v7.12h-7.12zM99.93 234.86h7.12v7.12h-7.12zM114.17 234.86h7.12v7.12h-7.12zM128.41 234.86h7.12v7.12h-7.12zM142.65 234.86h7.12v7.12h-7.12zM156.89 234.86h7.12v7.12h-7.12zM171.13 234.86h7.12v7.12h-7.12zM185.37 234.86h7.12v7.12h-7.12zM199.61 234.86h7.12v7.12h-7.12zM213.85 234.86h7.12v7.12h-7.12zM228.09 234.86h7.12v7.12h-7.12zM242.33 234.86h7.12v7.12h-7.12zM256.57 234.86h7.12v7.12h-7.12zM270.81 234.86h7.12v7.12h-7.12zM285.05 234.86h7.12v7.12h-7.12zM299.29 234.86h7.12v7.12h-7.12zM313.53 234.86h7.12v7.12h-7.12zM327.77 234.86h7.12v7.12h-7.12zM342.01 234.86h7.12v7.12h-7.12zM356.25 234.86h7.12v7.12h-7.12zM370.49 234.86h7.12v7.12h-7.12zM384.73 234.86h7.12v7.12h-7.12zM398.97 234.86h7.12v7.12h-7.12zM413.21 234.86h7.12v7.12h-7.12zM7.37 241.98h7.12v7.12h-7.12zM21.61 241.98h7.12v7.12h-7.12zM35.85 241.98h7.12v7.12h-7.12zM50.09 241.98h7.12v7.12h-7.12zM64.33 241.98h7.12v7.12h-7.12zM78.57 241.98h7.12v7.12h-7.12zM92.81 241.98h7.12v7.12h-7.12zM107.05 241.98h7.12v7.12h-7.12zM121.29 241.98h7.12v7.12h-7.12zM135.53 241.98h7.12v7.12h-7.12zM149.77 241.98h7.12v7.12h-7.12zM164.01 241.98h7.12v7.12h-7.12zM178.25 241.98h7.12v7.12h-7.12zM192.49 241.98h7.12v7.12h-7.12zM206.73 241.98h7.12v7.12h-7.12zM220.97 241.98h7.12v7.12h-7.12zM235.21 241.98h7.12v7.12h-7.12zM249.45 241.98h7.12v7.12h-7.12zM263.69 241.98h7.12v7.12h-7.12zM277.93 241.98h7.12v7.12h-7.12zM292.17 241.98h7.12v7.12h-7.12zM306.41 241.98h7.12v7.12h-7.12zM320.65 241.98h7.12v7.12h-7.12zM334.89 241.98h7.12v7.12h-7.12zM349.13 241.98h7.12v7.12h-7.12zM363.37 241.98h7.12v7.12h-7.12zM377.61 241.98h7.12v7.12h-7.12zM391.85 241.98h7.12v7.12h-7.12zM406.09 241.98h7.12v7.12h-7.12zM0.25 249.10h7.12v7.12h-7.12zM14.49 249.10h7.12v7.12h-7.12zM28.73 249.10h7.12v7.12h-7.12zM42.97 249.10h7.12v7.12h-7.12zM57.21 249.10h7.12v7.12h-7.12zM71.45 249.10h7.12v7.12h-7.12zM85.69 249.10h7.12v7.12h-7.12zM99.93 249.10h7.12v7.12h-7.12zM114.17 249.10h7.12v7.12h-7.12zM128.41 249.10h7.12v7.12h-7.12zM142.65 249.10h7.12v7.12h-7.12zM156.89 249.10h7.12v7.12h-7.12zM171.13 249.10h7.12v7.12h-7.12zM185.37 249.10h7.12v7.12h-7.12zM199.61 249.10h7.12v7.12h-7.12zM213.85 249.10h7.12v7.12h-7.12zM228.09 249.10h7.12v7.12h-7.12zM242.33 249.10h7.12v7.12h-7.12zM256.57 249.10h7.12v7.12h-7.12zM270.81 249.10h7.12v7.12h-7.12zM285.05 249.10h7.12v7.12h-7.12zM299.29 249.10h7.12v7.12h-7.12zM313.53 249.10h7.12v7.12h-7.12zM327.77 249.10h7.12v7.12h-7.12zM342.01 249.10h7.12v7.12h-7.12zM356.25 249.10h7.12v7.12h-7.12zM370.49 249.10h7.12v7.12h-7.12zM384.73 249.10h7.12v7.12h-7.12zM398.97 249.10h7.12v7.12h-7.12zM413.21 249.10h7.12v7.12h-7.12zM7.37 256.22h7.12v7.12h-7.12zM21.61 256.22h7.12v7.12h-7.12zM35.85 256.22h7.12v7.12h-7.12zM50.09 256.22h7.12v7.12h-7.12zM64.33 256.22h7.12v7.12h-7.12zM78.57 256.22h7.12v7.12h-7.12zM92.81 256.22h7.12v7.12h-7.12zM107.05 256.22h7.12v7.12h-7.12zM121.29 256.22h7.12v7.12h-7.12zM135.53 256.22h7.12v7.12h-7.12zM149.77 256.22h7.12v7.12h-7.12zM164.01 256.22h7.12v7.12h-7.12zM178.25 256.22h7.12v7.12h-7.12zM192.49 256.22h7.12v7.12h-7.12zM206.73 256.22h7.12v7.12h-7.12zM220.97 256.22h7.12v7.12h-7.12zM235.21 256.22h7.12v7.12h-7.12zM249.45 256.22h7.12v7.12h-7.12zM263.69 256.22h7.12v7.12h-7.12zM277.93 256.22h7.12v7.12h-7.12zM292.17 256.22h7.12v7.12h-7.12zM306.41 256.22h7.12v7.12h-7.12zM320.65 256.22h7.12v7.12h-7.12zM334.89 256.22h7.12v7.12h-7.12zM349.13 256.22h7.12v7.12h-7.12zM363.37 256.22h7.12v7.12h-7.12zM377.61 256.22h7.12v7.12h-7.12zM391.85 256.22h7.12v7.12h-7.12zM406.09 256.22h7.12v7.12h-7.12zM0.25 263.34h7.12v7.12h-7.12zM14.49 263.34h7.12v7.12h-7.12zM28.73 263.34h7.12v7.12h-7.12zM42.97 263.34h7.12v7.12h-7.12zM57.21 263.34h7.12v7.12h-7.12zM71.45 263.34h7.12v7.12h-7.12zM85.69 263.34h7.12v7.12h-7.12zM99.93 263.34h7.12v7.12h-7.12zM114.17 263.34h7.12v7.12h-7.12zM128.41 263.34h7.12v7.12h-7.12zM142.65 263.34h7.12v7.12h-7.12zM156.89 263.34h7.12v7.12h-7.12zM171.13 263.34h7.12v7.12h-7.12zM185.37 263.34h7.12v7.12h-7.12zM199.61 263.34h7.12v7.12h-7.12zM213.85 263.34h7.12v7.12h-7.12zM228.09 263.34h7.12v7.12h-7.12zM242.33 263.34h7.12v7.12h-7.12zM256.57 263.34h7.12v7.12h-7.12zM270.81 263.34h7.12v7.12h-7.12zM285.05 263.34h7.12v7.12h-7.12zM299.29 263.34h7.12v7.12h-7.12zM313.53 263.34h7.12v7.12h-7.12zM327.77 263.34h7.12v7.12h-7.12zM342.01 263.34h7.12v7.12h-7.12zM356.25 263.34h7.12v7.12h-7.12zM370.49 263.34h7.12v7.12h-7.12zM384.73 263.34h7.12v7.12h-7.12zM398.97 263.34h7.12v7.12h-7.12zM413.21 263.34h7.12v7.12h-7.12zM7.37 270.46h7.12v7.12h-7.12zM21.61 270.46h7.12v7.12h-7.12zM35.85 270.46h7.12v7.12h-7.12zM50.09 270.46h7.12v7.12h-7.12zM64.33 270.46h7.12v7.12h-7.12zM78.57 270.46h7.12v7.12h-7.12zM92.81 270.46h7.12v7.12h-7.12zM107.05 270.46h7.12v7.12h-7.12zM121.29 270.46h7.12v7.12h-7.12zM135.53 270.46h7.12v7.12h-7.12zM149.77 270.46h7.12v7.12h-7.12zM164.01 270.46h7.12v7.12h-7.12zM178.25 270.46h7.12v7.12h-7.12zM192.49 270.46h7.12v7.12h-7.12zM206.73 270.46h7.12v7.12h-7.12zM220.97 270.46h7.12v7.12h-7.12zM235.21 270.46h7.12v7.12h-7.12zM249.45 270.46h7.12v7.12h-7.12zM263.69 270.46h7.12v7.12h-7.12zM277.93 270.46h7.12v7.12h-7.12zM292.17 270.46h7.12v7.12h-7.12zM306.41 270.46h7.12v7.12h-7.12zM320.65 270.46h7.12v7.12h-7.12zM334.89 270.46h7.12v7.12h-7.12zM349.13 270.46h7.12v7.12h-7.12zM363.37 270.46h7.12v7.12h-7.12zM377.61 270.46h7.12v7.12h-7.12zM391.85 270.46h7.12v7.12h-7.12zM406.09 270.46h7.12v7.12h-7.12z"/></svg>
</div>
<div style="position:absolute;left:851.5px;top:216px;width:6.5px;height:165px;border-radius:3px;background:#a8a8a8"></div>
<svg style="position:absolute;left:448px;top:218px;" width="102" height="103" viewBox="0 0 102 103" fill="none"><defs><linearGradient id="gc" x1="0" y1="0" x2="0" y2="1"><stop offset="0" stop-color="#884bdb"/><stop offset="1" stop-color="#9b2bea"/></linearGradient></defs><circle cx="51.0" cy="51.5" r="51.0" fill="url(#gc)"/><circle cx="51" cy="52" r="46.5" stroke="#5e2aa8" stroke-opacity=".55" stroke-width=".8"/><path d="M50,13 C45,4 38,0.5 28,0.5 C12,0.5 0,12.5 0,30 C0,52 18,69 43,88.5 Q50,94.5 57,88.5 C82,69 100,52 100,30 C100,12.5 88,0.5 72,0.5 C62,0.5 55,4 50,13 Z" fill="#ffffff" transform="translate(9.5,13) scale(0.85,0.8494623655913979)"/><path d="M50,13 C45,4 38,0.5 28,0.5 C12,0.5 0,12.5 0,30 C0,52 18,69 43,88.5 Q50,94.5 57,88.5 C82,69 100,52 100,30 C100,12.5 88,0.5 72,0.5 C62,0.5 55,4 50,13 Z" fill="#ee3a7a" transform="translate(69,74) scale(0.19,0.1881720430107527)"/><path d="M50,13 C45,4 38,0.5 28,0.5 C12,0.5 0,12.5 0,30 C0,52 18,69 43,88.5 Q50,94.5 57,88.5 C82,69 100,52 100,30 C100,12.5 88,0.5 72,0.5 C62,0.5 55,4 50,13 Z" fill="#e8266a" transform="translate(84.0,82.0) scale(0.08,0.08602150537634409)"/></svg>
<svg style="position:absolute;left:554px;top:218px;" width="103" height="103" viewBox="0 0 103 103" fill="none"><defs><linearGradient id="gs" x1="0" y1="0" x2="0" y2="1"><stop offset="0" stop-color="#884bdb"/><stop offset="1" stop-color="#9b2bea"/></linearGradient></defs><path d="M51.5,0 C92.7,0 103,10.3 103,51.5 C103,92.7 92.7,103 51.5,103 C10.3,103 0,92.7 0,51.5 C0,10.3 10.3,0 51.5,0Z" fill="url(#gs)"/><circle cx="51.5" cy="52" r="46.5" stroke="#5e2aa8" stroke-opacity=".55" stroke-width=".8"/><path d="M50,13 C45,4 38,0.5 28,0.5 C12,0.5 0,12.5 0,30 C0,52 18,69 43,88.5 Q50,94.5 57,88.5 C82,69 100,52 100,30 C100,12.5 88,0.5 72,0.5 C62,0.5 55,4 50,13 Z" fill="#ffffff" transform="translate(9.5,13) scale(0.85,0.8494623655913979)"/><path d="M50,13 C45,4 38,0.5 28,0.5 C12,0.5 0,12.5 0,30 C0,52 18,69 43,88.5 Q50,94.5 57,88.5 C82,69 100,52 100,30 C100,12.5 88,0.5 72,0.5 C62,0.5 55,4 50,13 Z" fill="#ee3a7a" transform="translate(70,74) scale(0.19,0.1881720430107527)"/><path d="M50,13 C45,4 38,0.5 28,0.5 C12,0.5 0,12.5 0,30 C0,52 18,69 43,88.5 Q50,94.5 57,88.5 C82,69 100,52 100,30 C100,12.5 88,0.5 72,0.5 C62,0.5 55,4 50,13 Z" fill="#e8266a" transform="translate(85.0,82.0) scale(0.08,0.08602150537634409)"/></svg>
<svg style="position:absolute;left:660px;top:218px;" width="103" height="103" viewBox="0 0 103 103" fill="none"><defs><linearGradient id="gr" x1="0" y1="0" x2="0" y2="1"><stop offset="0" stop-color="#884bdb"/><stop offset="1" stop-color="#9b2bea"/></linearGradient></defs><rect x="0" y="0" width="103" height="103" rx="30.0" fill="url(#gr)"/><circle cx="51.5" cy="52" r="46.5" stroke="#5e2aa8" stroke-opacity=".55" stroke-width=".8"/><path d="M50,13 C45,4 38,0.5 28,0.5 C12,0.5 0,12.5 0,30 C0,52 18,69 43,88.5 Q50,94.5 57,88.5 C82,69 100,52 100,30 C100,12.5 88,0.5 72,0.5 C62,0.5 55,4 50,13 Z" fill="#ffffff" transform="translate(9.5,13) scale(0.85,0.8494623655913979)"/><path d="M50,13 C45,4 38,0.5 28,0.5 C12,0.5 0,12.5 0,30 C0,52 18,69 43,88.5 Q50,94.5 57,88.5 C82,69 100,52 100,30 C100,12.5 88,0.5 72,0.5 C62,0.5 55,4 50,13 Z" fill="#ee3a7a" transform="translate(70,74) scale(0.19,0.1881720430107527)"/><path d="M50,13 C45,4 38,0.5 28,0.5 C12,0.5 0,12.5 0,30 C0,52 18,69 43,88.5 Q50,94.5 57,88.5 C82,69 100,52 100,30 C100,12.5 88,0.5 72,0.5 C62,0.5 55,4 50,13 Z" fill="#e8266a" transform="translate(85.0,82.0) scale(0.08,0.08602150537634409)"/></svg>
<svg style="position:absolute;left:448px;top:357px;" width="103" height="103" viewBox="0 0 103 103" fill="none"><defs><linearGradient id="gq" x1="0" y1="0" x2="0" y2="1"><stop offset="0" stop-color="#884bdb"/><stop offset="1" stop-color="#9b2bea"/></linearGradient></defs><rect x="0" y="0" width="103" height="103" rx="12.0" fill="url(#gq)"/><circle cx="51.5" cy="51.5" r="46.5" stroke="#5e2aa8" stroke-opacity=".55" stroke-width=".8"/><path d="M50,13 C45,4 38,0.5 28,0.5 C12,0.5 0,12.5 0,30 C0,52 18,69 43,88.5 Q50,94.5 57,88.5 C82,69 100,52 100,30 C100,12.5 88,0.5 72,0.5 C62,0.5 55,4 50,13 Z" fill="#ffffff" transform="translate(9.5,14) scale(0.84,0.8387096774193549)"/><path d="M50,13 C45,4 38,0.5 28,0.5 C12,0.5 0,12.5 0,30 C0,52 18,69 43,88.5 Q50,94.5 57,88.5 C82,69 100,52 100,30 C100,12.5 88,0.5 72,0.5 C62,0.5 55,4 50,13 Z" fill="#ee3a7a" transform="translate(69.5,74) scale(0.19,0.1881720430107527)"/><path d="M50,13 C45,4 38,0.5 28,0.5 C12,0.5 0,12.5 0,30 C0,52 18,69 43,88.5 Q50,94.5 57,88.5 C82,69 100,52 100,30 C100,12.5 88,0.5 72,0.5 C62,0.5 55,4 50,13 Z" fill="#e8266a" transform="translate(84.5,82.0) scale(0.08,0.08602150537634409)"/></svg>
<svg style="position:absolute;left:554px;top:336.8px;" width="123" height="123.2" viewBox="0 0 123 123.2" fill="none"><defs><linearGradient id="gf" x1="0" y1="0" x2="0" y2="1"><stop offset="0" stop-color="#884bdb"/><stop offset="1" stop-color="#9b2bea"/></linearGradient></defs><rect x="0" y="0" width="123" height="123.2" rx="0.0" fill="url(#gf)"/><circle cx="61.5" cy="62" r="37.5" stroke="#5e2aa8" stroke-opacity=".55" stroke-width=".8"/><path d="M50,13 C45,4 38,0.5 28,0.5 C12,0.5 0,12.5 0,30 C0,52 18,69 43,88.5 Q50,94.5 57,88.5 C82,69 100,52 100,30 C100,12.5 88,0.5 72,0.5 C62,0.5 55,4 50,13 Z" fill="#ffffff" transform="translate(28,31) scale(0.68,0.6774193548387096)"/><path d="M50,13 C45,4 38,0.5 28,0.5 C12,0.5 0,12.5 0,30 C0,52 18,69 43,88.5 Q50,94.5 57,88.5 C82,69 100,52 100,30 C100,12.5 88,0.5 72,0.5 C62,0.5 55,4 50,13 Z" fill="#ee3a7a" transform="translate(76.4,80) scale(0.13299999999999998,0.13172043010752688)"/><path d="M50,13 C45,4 38,0.5 28,0.5 C12,0.5 0,12.5 0,30 C0,52 18,69 43,88.5 Q50,94.5 57,88.5 C82,69 100,52 100,30 C100,12.5 88,0.5 72,0.5 C62,0.5 55,4 50,13 Z" fill="#e8266a" transform="translate(86.9,85.6) scale(0.055999999999999994,0.06021505376344086)"/></svg>
<svg style="position:absolute;left:688px;top:398px;" width="54" height="55" viewBox="0 0 54 55" fill="none"><defs><linearGradient id="gl" x1="0" y1="0" x2="0" y2="1"><stop offset="0" stop-color="#884bdb"/><stop offset="1" stop-color="#9b2bea"/></linearGradient></defs><rect x="0" y="0" width="54" height="55" rx="5.0" fill="url(#gl)"/><path d="M50,13 C45,4 38,0.5 28,0.5 C12,0.5 0,12.5 0,30 C0,52 18,69 43,88.5 Q50,94.5 57,88.5 C82,69 100,52 100,30 C100,12.5 88,0.5 72,0.5 C62,0.5 55,4 50,13 Z" fill="#ffffff" transform="translate(5,7) scale(0.445,0.44623655913978494)"/><path d="M50,13 C45,4 38,0.5 28,0.5 C12,0.5 0,12.5 0,30 C0,52 18,69 43,88.5 Q50,94.5 57,88.5 C82,69 100,52 100,30 C100,12.5 88,0.5 72,0.5 C62,0.5 55,4 50,13 Z" fill="#ee3a7a" transform="translate(36.8,39.8) scale(0.095,0.09408602150537634)"/><path d="M50,13 C45,4 38,0.5 28,0.5 C12,0.5 0,12.5 0,30 C0,52 18,69 43,88.5 Q50,94.5 57,88.5 C82,69 100,52 100,30 C100,12.5 88,0.5 72,0.5 C62,0.5 55,4 50,13 Z" fill="#e8266a" transform="translate(44.3,43.8) scale(0.04,0.043010752688172046)"/></svg>
<svg style="position:absolute;left:755px;top:394px;" width="63" height="63" viewBox="0 0 63 63" fill="none"><defs><linearGradient id="go" x1="0" y1="0" x2="0" y2="1"><stop offset="0" stop-color="#884bdb"/><stop offset="1" stop-color="#9b2bea"/></linearGradient></defs><circle cx="31.5" cy="31.5" r="31.5" fill="url(#go)"/><path d="M50,13 C45,4 38,0.5 28,0.5 C12,0.5 0,12.5 0,30 C0,52 18,69 43,88.5 Q50,94.5 57,88.5 C82,69 100,52 100,30 C100,12.5 88,0.5 72,0.5 C62,0.5 55,4 50,13 Z" fill="#ffffff" transform="translate(6.5,9) scale(0.515,0.5053763440860215)"/><path d="M50,13 C45,4 38,0.5 28,0.5 C12,0.5 0,12.5 0,30 C0,52 18,69 43,88.5 Q50,94.5 57,88.5 C82,69 100,52 100,30 C100,12.5 88,0.5 72,0.5 C62,0.5 55,4 50,13 Z" fill="#ee3a7a" transform="translate(43.2,45.4) scale(0.10450000000000001,0.10349462365591398)"/><path d="M50,13 C45,4 38,0.5 28,0.5 C12,0.5 0,12.5 0,30 C0,52 18,69 43,88.5 Q50,94.5 57,88.5 C82,69 100,52 100,30 C100,12.5 88,0.5 72,0.5 C62,0.5 55,4 50,13 Z" fill="#e8266a" transform="translate(51.45,49.8) scale(0.044000000000000004,0.04731182795698925)"/></svg>
<div style="position:absolute;left:444px;top:476px;width:414px;height:10px;overflow:hidden"><div style="position:absolute;left:12px;top:0.8px;width:150px;height:60px;border-radius:24px;background:#8749da"></div></div>
<div class="t" style="left:399.0px;width:200px;text-align:center;top:322.04px;font-size:9.4px;line-height:9.4px;color:#262626;font-weight:400;letter-spacing:0px">Circle</div>
<div class="t" style="left:505.0px;width:200px;text-align:center;top:321.87px;font-size:9.6px;line-height:9.6px;color:#262626;font-weight:400;letter-spacing:0px">Squircle</div>
<div class="t" style="left:611.5px;width:200px;text-align:center;top:321.96px;font-size:9.5px;line-height:9.5px;color:#262626;font-weight:400;letter-spacing:0px">Rounded Square</div>
<div class="t" style="left:399.0px;width:200px;text-align:center;top:460.34px;font-size:9.4px;line-height:9.4px;color:#262626;font-weight:400;letter-spacing:0px">Square</div>
<div class="t" style="left:515.5px;width:200px;text-align:center;top:460.26px;font-size:9.5px;line-height:9.5px;color:#262626;font-weight:400;letter-spacing:0px">Full Bleed Layers</div>
<div class="t" style="left:615.0px;width:200px;text-align:center;top:460.79px;font-size:9.7px;line-height:9.7px;color:#262626;font-weight:400;letter-spacing:0px">Legacy Icon</div>
<div class="t" style="left:686.5px;width:200px;text-align:center;top:460.96px;font-size:9.5px;line-height:9.5px;color:#262626;font-weight:400;letter-spacing:0px">Round Icon</div>
<div style="position:absolute;left:150px;top:537px;width:726px;height:1px;background:#222326"></div>
<div style="position:absolute;left:160px;top:548.3px;width:16px;height:16px;border-radius:50%;box-shadow:inset 0 0 0 1px #5a5d63"></div>
<div class="t" style="left:160.0px;width:16px;text-align:center;top:551.27px;font-size:11.5px;line-height:11.5px;color:#a4a6ab;font-weight:400;letter-spacing:0px">?</div>
<div style="position:absolute;left:628.4px;top:546px;width:50.60000000000002px;height:19.5px;border-radius:4px;box-shadow:inset 0 0 0 1px #5a5d63"></div>
<div class="t" style="left:613.7px;width:80px;text-align:center;top:551.53px;font-size:10px;line-height:10px;color:#dfe1e5;font-weight:400;letter-spacing:0px">Cancel</div>
<div style="position:absolute;left:688px;top:546px;width:57.60000000000002px;height:19.5px;border-radius:4px;box-shadow:inset 0 0 0 1px #43454a"></div>
<div class="t" style="left:676.8px;width:80px;text-align:center;top:551.53px;font-size:10px;line-height:10px;color:#55575b;font-weight:400;letter-spacing:0px">Previous</div>
<div style="position:absolute;left:754px;top:546px;width:51.299999999999955px;height:19.5px;border-radius:4px;background:#3574f0"></div>
<div class="t" style="left:739.65px;width:80px;text-align:center;top:551.53px;font-size:10px;line-height:10px;color:#ffffff;font-weight:400;letter-spacing:0px">Next</div>
<div style="position:absolute;left:814px;top:546px;width:51px;height:19.5px;border-radius:4px;box-shadow:inset 0 0 0 1px #43454a"></div>
<div class="t" style="left:799.5px;width:80px;text-align:center;top:551.53px;font-size:10px;line-height:10px;color:#55575b;font-weight:400;letter-spacing:0px">Finish</div>
</body></html>
